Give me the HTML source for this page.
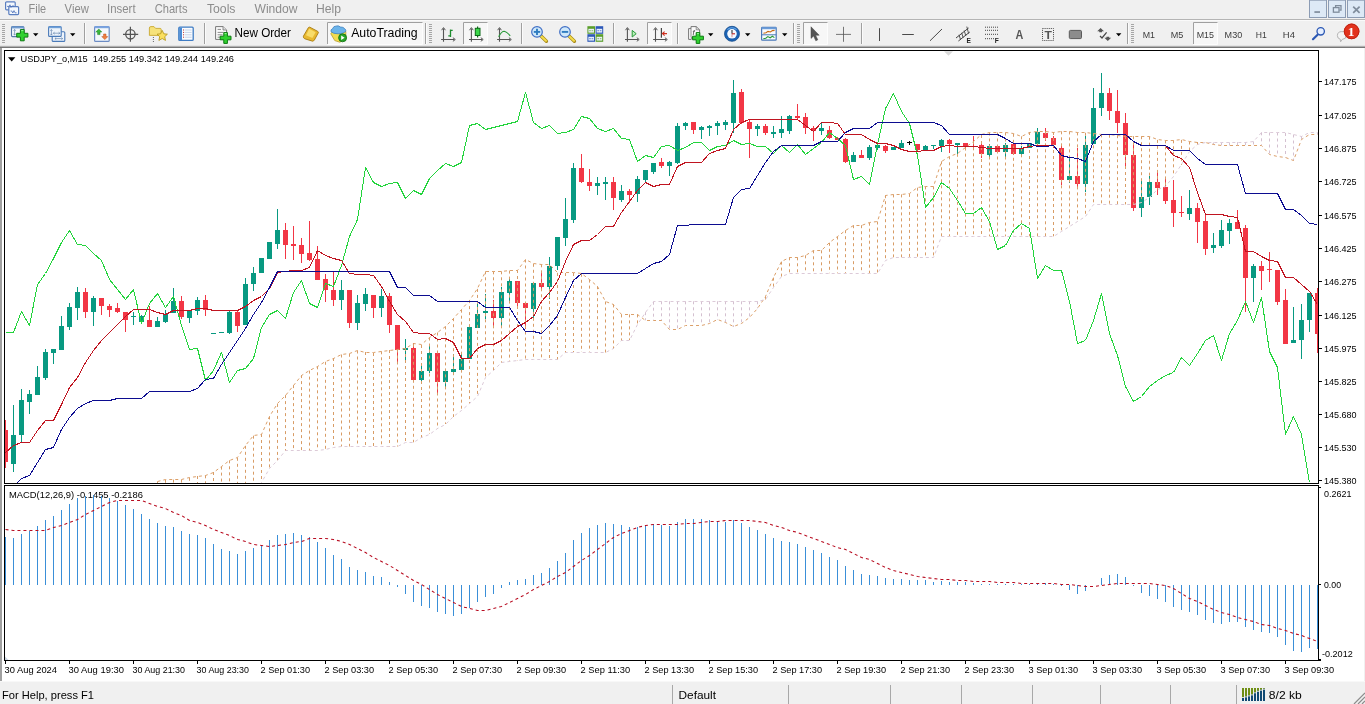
<!DOCTYPE html><html><head><meta charset="utf-8"><title>USDJPY_o,M15</title>
<style>html,body{margin:0;padding:0;background:#f0f0f0;overflow:hidden}svg{display:block;will-change:transform}text{font-family:"Liberation Sans",Arial,sans-serif;white-space:pre}</style></head><body>
<svg width="1365" height="704" viewBox="0 0 1365 704">
<rect x="0" y="0" width="1365" height="704" fill="#f0f0f0"/>
<!--MENU-->
<text x="28.6" y="12.8" font-size="12.2" textLength="17.6" lengthAdjust="spacingAndGlyphs" fill="#8c8c8c" >File</text>
<text x="64.6" y="12.8" font-size="12.2" textLength="24.2" lengthAdjust="spacingAndGlyphs" fill="#8c8c8c" >View</text>
<text x="107" y="12.8" font-size="12.2" textLength="28.6" lengthAdjust="spacingAndGlyphs" fill="#8c8c8c" >Insert</text>
<text x="154.7" y="12.8" font-size="12.2" textLength="32.8" lengthAdjust="spacingAndGlyphs" fill="#8c8c8c" >Charts</text>
<text x="206.9" y="12.8" font-size="12.2" textLength="28.6" lengthAdjust="spacingAndGlyphs" fill="#8c8c8c" >Tools</text>
<text x="254.5" y="12.8" font-size="12.2" textLength="43.0" lengthAdjust="spacingAndGlyphs" fill="#8c8c8c" >Window</text>
<text x="316" y="12.8" font-size="12.2" textLength="25" lengthAdjust="spacingAndGlyphs" fill="#8c8c8c" >Help</text>
<rect x="0" y="19" width="1365" height="1" fill="#b4b4b4"/>
<rect x="0" y="20" width="1365" height="1" fill="#fafafa"/>
<g fill="#f4f8fd" stroke="#5a7ec0" stroke-width="1.2"><rect x="5.6" y="1.8" width="9.6" height="8" rx="1"/><rect x="8.8" y="6.6" width="9.8" height="8" rx="1"/></g>
<path d="M7 6.4h2l1-1.6 1 2.6 1-1.4h2" stroke="#4a6eb8" stroke-width=".8" fill="none"/><path d="M10.6 11h1.2l1 2 1.2-2.4 1 2.2h1.6" stroke="#4a6eb8" stroke-width=".8" fill="none"/>
<rect x="1309.5" y="0.200" width="17" height="17.300" fill="#dde9f6" stroke="#8c9cb4" stroke-width="1"/>
<rect x="1328.5" y="0.200" width="17" height="17.300" fill="#dde9f6" stroke="#8c9cb4" stroke-width="1"/>
<rect x="1347.5" y="0.200" width="17" height="17.300" fill="#dde9f6" stroke="#8c9cb4" stroke-width="1"/>
<rect x="1314.4" y="11.2" width="5.6" height="1.7" fill="#7f8c9c"/>
<g fill="none" stroke="#7f8c9c" stroke-width="1.3"><path d="M1335.6 7.2V5.6h5.4v4.6h-1.6"/><rect x="1333.4" y="7.6" width="5.6" height="4.6"/></g>
<path d="M1353.2 6.6l6.4 6.2M1359.6 6.6l-6.4 6.2" stroke="#7f8c9c" stroke-width="1.7" fill="none"/>
<rect x="2" y="24" width="3" height="1" fill="#a6a6a6" shape-rendering="crispEdges"/>
<rect x="2" y="26" width="3" height="1" fill="#a6a6a6" shape-rendering="crispEdges"/>
<rect x="2" y="28" width="3" height="1" fill="#a6a6a6" shape-rendering="crispEdges"/>
<rect x="2" y="30" width="3" height="1" fill="#a6a6a6" shape-rendering="crispEdges"/>
<rect x="2" y="32" width="3" height="1" fill="#a6a6a6" shape-rendering="crispEdges"/>
<rect x="2" y="34" width="3" height="1" fill="#a6a6a6" shape-rendering="crispEdges"/>
<rect x="2" y="36" width="3" height="1" fill="#a6a6a6" shape-rendering="crispEdges"/>
<rect x="2" y="38" width="3" height="1" fill="#a6a6a6" shape-rendering="crispEdges"/>
<rect x="2" y="40" width="3" height="1" fill="#a6a6a6" shape-rendering="crispEdges"/>
<rect x="2" y="42" width="3" height="1" fill="#a6a6a6" shape-rendering="crispEdges"/>
<rect x="11.5" y="26.6" width="12.4" height="10" rx="1" fill="#f2f6fb" stroke="#5578a8" stroke-width="1.1"/><rect x="11.5" y="26.4" width="12.4" height="2" fill="#6f9bd0"/>
<path d="M14.6 29.6v5.4M13.6 30.8l1-1.4 1 1.4M13.6 33.8l1 1.4 1-1.4" stroke="#6a8ab0" stroke-width=".7" fill="none"/>
<path d="M20.400000000000002 29.6h3.8v3.6999999999999997h3.6999999999999997v3.8h-3.6999999999999997v3.6999999999999997h-3.8v-3.6999999999999997h-3.6999999999999997v-3.8h3.6999999999999997z" fill="#2fd12f" stroke="#0d7a12" stroke-width="1" stroke-linejoin="round"/>
<path d="M21.200000000000003 30.6h2.1999999999999997" stroke="#9af59a" stroke-width="1"/>
<path d="M33 33.2h5.4l-2.7 3z" fill="#000"/>
<rect x="52.2" y="31.8" width="12.6" height="9.6" rx="1" fill="#eef4fb" stroke="#4a7ab8" stroke-width="1.1"/>
<path d="M55 38.6h7.6M61.4 37.6l1.3 1-1.3 1M56.200 37.600l-1.300 1 1.300 1" stroke="#6a8ab0" stroke-width=".7" fill="none"/>
<rect x="48.6" y="26.6" width="12.6" height="9.800" rx="1" fill="#eef4fb" stroke="#4a7ab8" stroke-width="1.1"/>
<rect x="48.6" y="26.4" width="12.6" height="1.8" fill="#6fa0d8"/>
<path d="M51.400 29.600v5.400M50.400 30.800l1-1.300 1 1.300M50.400 33.800l1 1.200 1-1.200M53.400 33.200h6.400M58.600 32.200l1.300 1-1.300 1M54.600 32.200l-1.300 1 1.300 1" stroke="#6a8ab0" stroke-width=".7" fill="none"/>
<path d="M70 33.2h5.4l-2.7 3z" fill="#000"/>
<rect x="84" y="23" width="1" height="21" fill="#a0a0a0" shape-rendering="crispEdges"/>
<rect x="85" y="23" width="1" height="21" fill="#fbfbfb" shape-rendering="crispEdges"/>
<rect x="94.6" y="26.6" width="14.6" height="14.8" rx="1" fill="#f4f8fc" stroke="#6c8cc4" stroke-width="1.2"/><rect x="94.6" y="26.2" width="14.6" height="2" fill="#7aa4e0"/>
<path d="M98.8 29l3 3h-1.8v2.6h-2.4v-2.6h-1.8z" fill="#3cb83c" stroke="#1a8020" stroke-width=".5"/>
<path d="M104.8 39.6l-3-3h1.8v-2.6h2.4v2.6h1.8z" fill="#f08040" stroke="#c04818" stroke-width=".5"/>
<circle cx="130.4" cy="34.3" r="4.7" fill="none" stroke="#555" stroke-width="1.3"/><path d="M130.4 26.8v15M123 34.3h15.200" stroke="#555" stroke-width="1.200"/>
<path d="M149.4 35.4V28q0-1.4 1.4-1.4h3.2l1.6 1.8h4.6q1 0 1 1V35.4z" fill="#f6e27a" stroke="#c8a832" stroke-width=".9"/>
<path d="M153.4 37v5" stroke="#666" stroke-width="1" stroke-dasharray="1 1"/>
<path d="M162.2 30.4l1.6 3.4 3.6.4-2.7 2.5.8 3.7-3.3-1.9-3.3 1.9.8-3.7-2.7-2.5 3.6-.4z" fill="#fbe060" stroke="#b89a20" stroke-width=".9" stroke-linejoin="round"/>
<rect x="178.8" y="27.2" width="14.4" height="13.2" rx="1" fill="#fbfdff" stroke="#3f7cc4" stroke-width="1.3"/><rect x="179.2" y="27.6" width="2.8" height="12.4" fill="#4a8ad4"/>
<path d="M184.6 30h7M184.6 32.4h7M184.6 34.8h7M184.6 37.2h7" stroke="#b8c8e4" stroke-width=".8"/><path d="M183 30h1M183 32.4h1M183 34.8h1M183 37.2h1" stroke="#c03030" stroke-width="1"/>
<rect x="204" y="23" width="1" height="21" fill="#a0a0a0" shape-rendering="crispEdges"/>
<rect x="205" y="23" width="1" height="21" fill="#fbfbfb" shape-rendering="crispEdges"/>
<path d="M215.6 26.6h7.4l3.6 3.4v9.4h-11z" fill="#fbfbfb" stroke="#777" stroke-width="1"/>
<path d="M223.0 26.6v3.4h3.6" fill="#e0e0e0" stroke="#777" stroke-width=".8"/>
<path d="M217.6 29.4h3.4M217.6 32.4h6M217.6 34.8h5M217.6 37.2h3" stroke="#8a8a8a" stroke-width="1"/>
<path d="M223.79999999999998 32.6h3.6v3.6000000000000005h3.6000000000000005v3.6h-3.6000000000000005v3.6000000000000005h-3.6v-3.6000000000000005h-3.6000000000000005v-3.6h3.6000000000000005z" fill="#2fd12f" stroke="#0d7a12" stroke-width="1" stroke-linejoin="round"/>
<path d="M224.6 33.6h2.0" stroke="#9af59a" stroke-width="1"/>
<text x="234.5" y="36.7" font-size="12" textLength="56.5" lengthAdjust="spacingAndGlyphs" fill="#000">New Order</text>
<path d="M303.4 36.2l5-8.6q.5-.8 1.4-.4l8 4.2q1 .6.4 1.6l-3.8 7q-.6 1-1.800 1.200l-7.8-2.400q-1.800-.8-1.400-2.600z" fill="#e8b830" stroke="#a87c10" stroke-width=".9" stroke-linejoin="round"/>
<path d="M309.2 28.800l6.400 3.400-3.200 5.800-6.400-2.800z" fill="#f8dc6a"/>
<rect x="327" y="22" width="96" height="22" fill="#f7f7f7"/>
<path d="M327.5 44V22.5H423" fill="none" stroke="#a0a0a0" stroke-width="1"/>
<path d="M327.5 44.5H422.5V22.5" fill="none" stroke="#fdfdfd" stroke-width="1"/>
<path d="M332.6 31.400l-1.800 2.400 4 6.800 5 1.600 6-3.400v-7.400z" fill="#f2dc50" stroke="#b89c28" stroke-width=".8" stroke-linejoin="round"/>
<path d="M331 31.600q-.6-2 1.600-3 .8-2.600 3.800-2.600 2.200-.6 4 1 3-.2 4.400 1.800 1.800 1.200.6 3-2.400 2-7.200 2-5.200 0-7.200-2.200z" fill="#6cb4ea" stroke="#3f82c0" stroke-width=".8"/>
<circle cx="342.600" cy="37.800" r="4" fill="#28a428" stroke="#0e700e" stroke-width=".8"/><path d="M341.200 35.600l3.400 2.200-3.400 2.200z" fill="#fff"/>
<text x="351.2" y="36.7" font-size="12" textLength="66.4" lengthAdjust="spacingAndGlyphs" fill="#000">AutoTrading</text>
<rect x="425" y="23" width="1" height="21" fill="#a0a0a0" shape-rendering="crispEdges"/>
<rect x="426" y="23" width="1" height="21" fill="#fbfbfb" shape-rendering="crispEdges"/>
<rect x="429" y="24" width="3" height="1" fill="#a6a6a6" shape-rendering="crispEdges"/>
<rect x="429" y="26" width="3" height="1" fill="#a6a6a6" shape-rendering="crispEdges"/>
<rect x="429" y="28" width="3" height="1" fill="#a6a6a6" shape-rendering="crispEdges"/>
<rect x="429" y="30" width="3" height="1" fill="#a6a6a6" shape-rendering="crispEdges"/>
<rect x="429" y="32" width="3" height="1" fill="#a6a6a6" shape-rendering="crispEdges"/>
<rect x="429" y="34" width="3" height="1" fill="#a6a6a6" shape-rendering="crispEdges"/>
<rect x="429" y="36" width="3" height="1" fill="#a6a6a6" shape-rendering="crispEdges"/>
<rect x="429" y="38" width="3" height="1" fill="#a6a6a6" shape-rendering="crispEdges"/>
<rect x="429" y="40" width="3" height="1" fill="#a6a6a6" shape-rendering="crispEdges"/>
<rect x="429" y="42" width="3" height="1" fill="#a6a6a6" shape-rendering="crispEdges"/>
<path d="M443.5 28.4V41.8M441.1 39.5H454.3" stroke="#555" stroke-width="1.1" fill="none"/>
<path d="M441.6 30.2L443.5 27.6L445.4 30.2M452.9 37.7L455.3 39.5L452.9 41.3" stroke="#555" stroke-width="1" fill="none"/>
<path d="M450.5 29.400v7.600M450.500 30.400h2.200M448.300 35.800h2.200" stroke="#1e8c2e" stroke-width="1.300" fill="none"/>
<rect x="463" y="22" width="25" height="22" fill="#f7f7f7"/>
<path d="M463.5 44V22.5H488" fill="none" stroke="#a0a0a0" stroke-width="1"/>
<path d="M463.5 44.5H487.5V22.5" fill="none" stroke="#fdfdfd" stroke-width="1"/>
<path d="M471.4 28.4V41.8M469.0 39.5H482.2" stroke="#555" stroke-width="1.1" fill="none"/>
<path d="M469.5 30.2L471.4 27.6L473.29999999999995 30.2M480.79999999999995 37.7L483.2 39.5L480.79999999999995 41.3" stroke="#555" stroke-width="1" fill="none"/>
<path d="M477.600 26.400v11" stroke="#0d6a18" stroke-width="1.200"/><rect x="475.300" y="28.300" width="4.700" height="7.200" fill="#3ad648" stroke="#0d6a18" stroke-width="1"/>
<path d="M499.5 28.4V41.8M497.1 39.5H510.3" stroke="#555" stroke-width="1.1" fill="none"/>
<path d="M497.6 30.2L499.5 27.6L501.4 30.2M508.9 37.7L511.3 39.5L508.9 41.3" stroke="#555" stroke-width="1" fill="none"/>
<path d="M498.600 36.800q3-5.600 5.600-5.600 2.400.4 6 4.600" stroke="#2a9a3a" stroke-width="1.100" fill="none"/>
<rect x="521" y="23" width="1" height="21" fill="#a0a0a0" shape-rendering="crispEdges"/>
<rect x="522" y="23" width="1" height="21" fill="#fbfbfb" shape-rendering="crispEdges"/>
<path d="M540.8 35.800l5.600 5.400" stroke="#a88a18" stroke-width="3.400" stroke-linecap="round"/><path d="M541.2 36.200l4.800 4.600" stroke="#f4dc4a" stroke-width="2" stroke-linecap="round"/>
<circle cx="537" cy="31.900" r="5.300" fill="#cfe8fa" stroke="#3f6ec4" stroke-width="1.200"/>
<path d="M533.8 31.900h6.400" stroke="#2f7cc0" stroke-width="1.900"/>
<path d="M537 28.700v6.400" stroke="#2f7cc0" stroke-width="1.900"/>
<path d="M568.8 35.800l5.600 5.400" stroke="#a88a18" stroke-width="3.400" stroke-linecap="round"/><path d="M569.2 36.200l4.800 4.600" stroke="#f4dc4a" stroke-width="2" stroke-linecap="round"/>
<circle cx="565" cy="31.900" r="5.300" fill="#cfe8fa" stroke="#3f6ec4" stroke-width="1.200"/>
<path d="M561.8 31.900h6.400" stroke="#2f7cc0" stroke-width="1.900"/>
<rect x="587.4" y="26.2" width="7.600" height="7.600" fill="#5a9e2a"/><rect x="588.4" y="28.8" width="5.600" height="3.800" fill="#e8f0fa"/><path d="M589.1999999999999 30.7h1.600M591.6 30.7h1.600" stroke="#5a9e2a" stroke-width=".7"/>
<rect x="595.6" y="26.2" width="7.600" height="7.600" fill="#2c58b8"/><rect x="596.6" y="28.8" width="5.600" height="3.800" fill="#e8f0fa"/><path d="M597.4 30.7h1.600M599.8000000000001 30.7h1.600" stroke="#2c58b8" stroke-width=".7"/>
<rect x="587.4" y="34.2" width="7.600" height="7.600" fill="#2c58b8"/><rect x="588.4" y="36.800000000000004" width="5.600" height="3.800" fill="#e8f0fa"/><path d="M589.1999999999999 38.7h1.600M591.6 38.7h1.600" stroke="#2c58b8" stroke-width=".7"/>
<rect x="595.6" y="34.2" width="7.600" height="7.600" fill="#5a9e2a"/><rect x="596.6" y="36.800000000000004" width="5.600" height="3.800" fill="#e8f0fa"/><path d="M597.4 38.7h1.600M599.8000000000001 38.7h1.600" stroke="#5a9e2a" stroke-width=".7"/>
<rect x="613" y="23" width="1" height="21" fill="#a0a0a0" shape-rendering="crispEdges"/>
<rect x="614" y="23" width="1" height="21" fill="#fbfbfb" shape-rendering="crispEdges"/>
<path d="M627.4 28.4V41.8M625.0 39.5H638.1999999999999" stroke="#555" stroke-width="1.1" fill="none"/>
<path d="M625.5 30.2L627.4 27.6L629.3 30.2M636.8 37.7L639.1999999999999 39.5L636.8 41.3" stroke="#555" stroke-width="1" fill="none"/>
<path d="M632.200 30.400l4 3.300-4 3.300z" fill="#b8f0b8" stroke="#2a9a3a" stroke-width="1"/>
<rect x="647" y="22" width="25" height="22" fill="#f7f7f7"/>
<path d="M647.5 44V22.5H672" fill="none" stroke="#a0a0a0" stroke-width="1"/>
<path d="M647.5 44.5H671.5V22.5" fill="none" stroke="#fdfdfd" stroke-width="1"/>
<path d="M655.5 28.4V41.8M653.1 39.5H666.3" stroke="#555" stroke-width="1.1" fill="none"/>
<path d="M653.6 30.2L655.5 27.6L657.4 30.2M664.9 37.7L667.3 39.5L664.9 41.3" stroke="#555" stroke-width="1" fill="none"/>
<path d="M661.400 28v9.800" stroke="#444" stroke-width="1.200"/><path d="M667 33.600h-4.400M664.600 31.600l-2.200 2 2.200 2" stroke="#d03020" stroke-width="1.100" fill="none"/>
<rect x="677" y="23" width="1" height="21" fill="#a0a0a0" shape-rendering="crispEdges"/>
<rect x="678" y="23" width="1" height="21" fill="#fbfbfb" shape-rendering="crispEdges"/>
<path d="M688.600 28.600h2.400v-2h5.200l3.400 3.200v9h-8.600v.6h-2.400z" fill="#fbfbfb" stroke="#777" stroke-width="1"/><path d="M696.200 26.600v3.200h3.400M691 28.600v8.800h6" fill="none" stroke="#777" stroke-width=".8"/>
<text x="692.400" y="34.600" font-size="6.500" font-style="italic" font-weight="bold" fill="#666">f</text>
<path d="M696.2 32.6h3.6v3.6000000000000005h3.6000000000000005v3.6h-3.6000000000000005v3.6000000000000005h-3.6v-3.6000000000000005h-3.6000000000000005v-3.6h3.6000000000000005z" fill="#2fd12f" stroke="#0d7a12" stroke-width="1" stroke-linejoin="round"/>
<path d="M697.0 33.6h2.0" stroke="#9af59a" stroke-width="1"/>
<path d="M708 33.2h5.4l-2.7 3z" fill="#000"/>
<circle cx="732" cy="33.800" r="7.500" fill="#1c63b4" stroke="#124a8c" stroke-width=".8"/><circle cx="732" cy="33.800" r="4.800" fill="#f6faff"/><path d="M727.400 29.600a6.600 6.600 0 0 1 9.200 0" stroke="#6aa8e8" stroke-width="1.200" fill="none"/>
<path d="M732 33.800v-3.800" stroke="#333" stroke-width="1.100"/><path d="M732 33.800h3" stroke="#c02020" stroke-width="1.100"/><path d="M732 33.800v3.400" stroke="#c06060" stroke-width=".7"/>
<path d="M745 33.2h5.4l-2.7 3z" fill="#000"/>
<rect x="761.600" y="27.400" width="14.600" height="12.800" rx=".8" fill="#f8fbff" stroke="#4a78b8" stroke-width="1.200"/><rect x="761.600" y="27.200" width="14.600" height="2" fill="#6c9cd8"/><path d="M761.600 34.800h14.600" stroke="#4a78b8" stroke-width="1"/>
<path d="M763.400 33.200l2.600-.4 2-1.400 2.400.6 2-1.400 2.200-.2" stroke="#c86a10" stroke-width="1.100" fill="none"/><path d="M763.400 38.600l2.400-.4 2-1.600 2.400 1.200 2.200-1.600 2 1.400" stroke="#2a9a3a" stroke-width="1.100" fill="none"/>
<path d="M782 33.2h5.4l-2.7 3z" fill="#000"/>
<rect x="793" y="23" width="1" height="21" fill="#a0a0a0" shape-rendering="crispEdges"/>
<rect x="794" y="23" width="1" height="21" fill="#fbfbfb" shape-rendering="crispEdges"/>
<rect x="797" y="24" width="3" height="1" fill="#a6a6a6" shape-rendering="crispEdges"/>
<rect x="797" y="26" width="3" height="1" fill="#a6a6a6" shape-rendering="crispEdges"/>
<rect x="797" y="28" width="3" height="1" fill="#a6a6a6" shape-rendering="crispEdges"/>
<rect x="797" y="30" width="3" height="1" fill="#a6a6a6" shape-rendering="crispEdges"/>
<rect x="797" y="32" width="3" height="1" fill="#a6a6a6" shape-rendering="crispEdges"/>
<rect x="797" y="34" width="3" height="1" fill="#a6a6a6" shape-rendering="crispEdges"/>
<rect x="797" y="36" width="3" height="1" fill="#a6a6a6" shape-rendering="crispEdges"/>
<rect x="797" y="38" width="3" height="1" fill="#a6a6a6" shape-rendering="crispEdges"/>
<rect x="797" y="40" width="3" height="1" fill="#a6a6a6" shape-rendering="crispEdges"/>
<rect x="797" y="42" width="3" height="1" fill="#a6a6a6" shape-rendering="crispEdges"/>
<rect x="803" y="22" width="25" height="22" fill="#f7f7f7"/>
<path d="M803.5 44V22.5H828" fill="none" stroke="#a0a0a0" stroke-width="1"/>
<path d="M803.5 44.5H827.5V22.5" fill="none" stroke="#fdfdfd" stroke-width="1"/>
<path d="M811 26.800v11.600l2.600-2.400 2.200 4.800 2-1-2.200-4.600h3.600z" fill="#555" stroke="#444" stroke-width=".5" stroke-linejoin="round"/>
<path d="M843.500 26.800v15M836 34.400h15" stroke="#555" stroke-width=".800" fill="none"/>
<rect x="861" y="23" width="1" height="21" fill="#a0a0a0" shape-rendering="crispEdges"/>
<rect x="862" y="23" width="1" height="21" fill="#fbfbfb" shape-rendering="crispEdges"/>
<path d="M879.500 28.200v12.800" stroke="#4a4a4a" stroke-width="1"/>
<path d="M902.200 34.500h11.600" stroke="#4a4a4a" stroke-width="1"/>
<path d="M930 40.800l12-11.800" stroke="#4a4a4a" stroke-width="1"/>
<path d="M956 38l12.600-10M958.400 41l11.400-9" stroke="#444" stroke-width="1"/><path d="M959 34.800l1.600 5M961.600 32.800l1.600 5M964.200 30.600l1.600 5.200M966.800 26.600l1.800 7" stroke="#444" stroke-width=".9"/>
<text x="966.400" y="42.800" font-size="6.600" font-weight="bold" fill="#222">E</text>
<path d="M985 27.2h13" stroke="#444" stroke-width="1" stroke-dasharray="1 1"/>
<path d="M985 30.3h13" stroke="#444" stroke-width="1" stroke-dasharray="1 1"/>
<path d="M985 34.3h13" stroke="#444" stroke-width="1" stroke-dasharray="1 1"/>
<path d="M985 38.7h13" stroke="#444" stroke-width="1" stroke-dasharray="1 1"/>
<rect x="994" y="37.600" width="5" height="5.500" fill="#f0f0f0"/><text x="994.800" y="42.800" font-size="6.600" font-weight="bold" fill="#222">F</text>
<text x="1015.600" y="39.200" font-size="12.400" font-weight="bold" fill="#555" textLength="7.800" lengthAdjust="spacingAndGlyphs">A</text>
<rect x="1042.500" y="28.500" width="11" height="12" fill="none" stroke="#444" stroke-width="1" stroke-dasharray="1 1.080"/><text x="1044.400" y="39.200" font-size="10.500" font-weight="bold" fill="#555" textLength="7.400" lengthAdjust="spacingAndGlyphs">T</text>
<rect x="1069.300" y="30.400" width="12.200" height="8.200" rx="1.200" fill="#8c8c8c" stroke="#5a5a5a" stroke-width="1"/>
<path d="M1100.600 28l3.400 3.200h-2v1h-2.800v-1h-2z" fill="#555"/><path d="M1107.800 41l-3.400-3.200h2v-1h2.800v1h2z" fill="#555"/><path d="M1100 36l2 2 4.600-5.600" stroke="#444" stroke-width="1.200" fill="none"/>
<path d="M1116 33.2h5.4l-2.7 3z" fill="#000"/>
<rect x="1127" y="23" width="1" height="21" fill="#a0a0a0" shape-rendering="crispEdges"/>
<rect x="1128" y="23" width="1" height="21" fill="#fbfbfb" shape-rendering="crispEdges"/>
<rect x="1131" y="24" width="3" height="1" fill="#a6a6a6" shape-rendering="crispEdges"/>
<rect x="1131" y="26" width="3" height="1" fill="#a6a6a6" shape-rendering="crispEdges"/>
<rect x="1131" y="28" width="3" height="1" fill="#a6a6a6" shape-rendering="crispEdges"/>
<rect x="1131" y="30" width="3" height="1" fill="#a6a6a6" shape-rendering="crispEdges"/>
<rect x="1131" y="32" width="3" height="1" fill="#a6a6a6" shape-rendering="crispEdges"/>
<rect x="1131" y="34" width="3" height="1" fill="#a6a6a6" shape-rendering="crispEdges"/>
<rect x="1131" y="36" width="3" height="1" fill="#a6a6a6" shape-rendering="crispEdges"/>
<rect x="1131" y="38" width="3" height="1" fill="#a6a6a6" shape-rendering="crispEdges"/>
<rect x="1131" y="40" width="3" height="1" fill="#a6a6a6" shape-rendering="crispEdges"/>
<rect x="1131" y="42" width="3" height="1" fill="#a6a6a6" shape-rendering="crispEdges"/>
<rect x="1193" y="22" width="25" height="22" fill="#f7f7f7"/>
<path d="M1193.5 44V22.5H1218" fill="none" stroke="#a0a0a0" stroke-width="1"/>
<path d="M1193.5 44.5H1217.5V22.5" fill="none" stroke="#fdfdfd" stroke-width="1"/>
<text x="1142.7" y="37.800" font-size="9.600" textLength="12.3" lengthAdjust="spacingAndGlyphs" fill="#3c3c3c">M1</text>
<text x="1170.7" y="37.800" font-size="9.600" textLength="12.6" lengthAdjust="spacingAndGlyphs" fill="#3c3c3c">M5</text>
<text x="1196.7" y="37.800" font-size="9.600" textLength="17.3" lengthAdjust="spacingAndGlyphs" fill="#3c3c3c">M15</text>
<text x="1224.6" y="37.800" font-size="9.600" textLength="17.6" lengthAdjust="spacingAndGlyphs" fill="#3c3c3c">M30</text>
<text x="1255.8" y="37.800" font-size="9.600" textLength="11.0" lengthAdjust="spacingAndGlyphs" fill="#3c3c3c">H1</text>
<text x="1282.8" y="37.800" font-size="9.600" textLength="12.1" lengthAdjust="spacingAndGlyphs" fill="#3c3c3c">H4</text>
<path d="M1317.600 34.800l-4.600 4.400" stroke="#2c58b4" stroke-width="2.200" stroke-linecap="round"/><circle cx="1320.700" cy="31.300" r="3.700" fill="#e4eeff" stroke="#2c58b4" stroke-width="1.300"/>
<path d="M1337.400 35.600q0-4 4.400-4t4.400 4q0 3.600-4 3.800l-1.600 2.400-.4-2.600q-2.800-.6-2.800-3.600z" fill="#f4f4f4" stroke="#b4b4b4" stroke-width="1"/>
<circle cx="1351.600" cy="31.400" r="7.800" fill="#e2321c"/><circle cx="1351.600" cy="31.400" r="7.300" fill="none" stroke="#c02414" stroke-width="1"/>
<text x="1347.800" y="36.200" font-size="13.500" font-weight="bold" fill="#fff" style="font-family:'Liberation Serif',serif">1</text>
<rect x="0" y="45" width="1365" height="1" fill="#e4e4e4"/>
<rect x="0" y="46" width="1365" height="1" fill="#b0b0b0"/>
<rect x="0" y="47" width="1365" height="1" fill="#767676"/>
<rect x="0" y="48" width="2" height="633" fill="#a0a0a0"/>
<rect x="2" y="48" width="1362" height="633" fill="#fff"/>
<rect x="0" y="681" width="1365" height="1" fill="#f8f8f8"/>
<g shape-rendering="crispEdges" fill="#000">
<rect x="4" y="50" width="1315" height="1"/>
<rect x="4" y="50" width="1" height="434"/><rect x="4" y="485" width="1" height="176"/>
<rect x="1318" y="50" width="1" height="434"/><rect x="1318" y="485" width="1" height="176"/>
<rect x="4" y="483" width="1315" height="1"/>
<rect x="4" y="485" width="1315" height="1"/>
<rect x="4" y="660" width="1317" height="1"/>
<rect x="1319" y="81" width="3" height="1"/>
<rect x="1319" y="115" width="3" height="1"/>
<rect x="1319" y="148" width="3" height="1"/>
<rect x="1319" y="181" width="3" height="1"/>
<rect x="1319" y="215" width="3" height="1"/>
<rect x="1319" y="248" width="3" height="1"/>
<rect x="1319" y="281" width="3" height="1"/>
<rect x="1319" y="315" width="3" height="1"/>
<rect x="1319" y="348" width="3" height="1"/>
<rect x="1319" y="381" width="3" height="1"/>
<rect x="1319" y="414" width="3" height="1"/>
<rect x="1319" y="447" width="3" height="1"/>
<rect x="1319" y="480" width="3" height="1"/>
<rect x="1319" y="487" width="2" height="1"/>
<rect x="1319" y="584" width="2" height="1"/>
<rect x="1319" y="659" width="2" height="1"/>
<rect x="5" y="661" width="1" height="3"/>
<rect x="69" y="661" width="1" height="3"/>
<rect x="133" y="661" width="1" height="3"/>
<rect x="197" y="661" width="1" height="3"/>
<rect x="261" y="661" width="1" height="3"/>
<rect x="325" y="661" width="1" height="3"/>
<rect x="389" y="661" width="1" height="3"/>
<rect x="453" y="661" width="1" height="3"/>
<rect x="517" y="661" width="1" height="3"/>
<rect x="581" y="661" width="1" height="3"/>
<rect x="645" y="661" width="1" height="3"/>
<rect x="709" y="661" width="1" height="3"/>
<rect x="773" y="661" width="1" height="3"/>
<rect x="837" y="661" width="1" height="3"/>
<rect x="901" y="661" width="1" height="3"/>
<rect x="965" y="661" width="1" height="3"/>
<rect x="1029" y="661" width="1" height="3"/>
<rect x="1093" y="661" width="1" height="3"/>
<rect x="1157" y="661" width="1" height="3"/>
<rect x="1221" y="661" width="1" height="3"/>
<rect x="1285" y="661" width="1" height="3"/>
</g>
<text x="1324" y="84.9" font-size="9.7" textLength="32.6" lengthAdjust="spacingAndGlyphs" fill="#000" >147.175</text>
<text x="1324" y="118.7" font-size="9.7" textLength="32.6" lengthAdjust="spacingAndGlyphs" fill="#000" >147.025</text>
<text x="1324" y="151.9" font-size="9.7" textLength="32.6" lengthAdjust="spacingAndGlyphs" fill="#000" >146.875</text>
<text x="1324" y="185.1" font-size="9.7" textLength="32.6" lengthAdjust="spacingAndGlyphs" fill="#000" >146.725</text>
<text x="1324" y="218.6" font-size="9.7" textLength="32.6" lengthAdjust="spacingAndGlyphs" fill="#000" >146.575</text>
<text x="1324" y="251.7" font-size="9.7" textLength="32.6" lengthAdjust="spacingAndGlyphs" fill="#000" >146.425</text>
<text x="1324" y="285.0" font-size="9.7" textLength="32.6" lengthAdjust="spacingAndGlyphs" fill="#000" >146.275</text>
<text x="1324" y="318.6" font-size="9.7" textLength="32.6" lengthAdjust="spacingAndGlyphs" fill="#000" >146.125</text>
<text x="1324" y="351.9" font-size="9.7" textLength="32.6" lengthAdjust="spacingAndGlyphs" fill="#000" >145.975</text>
<text x="1324" y="385.2" font-size="9.7" textLength="32.6" lengthAdjust="spacingAndGlyphs" fill="#000" >145.825</text>
<text x="1324" y="418.1" font-size="9.7" textLength="32.6" lengthAdjust="spacingAndGlyphs" fill="#000" >145.680</text>
<text x="1324" y="451.1" font-size="9.7" textLength="32.6" lengthAdjust="spacingAndGlyphs" fill="#000" >145.530</text>
<text x="1324" y="484.1" font-size="9.7" textLength="32.6" lengthAdjust="spacingAndGlyphs" fill="#000" >145.380</text>
<text x="1324" y="496.6" font-size="9.7" textLength="27.5" lengthAdjust="spacingAndGlyphs" fill="#000" >0.2621</text>
<text x="1324" y="587.8" font-size="9.7" textLength="17" lengthAdjust="spacingAndGlyphs" fill="#000" >0.00</text>
<text x="1322" y="657.4" font-size="9.7" textLength="30.7" lengthAdjust="spacingAndGlyphs" fill="#000" >-0.2012</text>
<text x="4.5" y="673" font-size="9.8" textLength="52.5" lengthAdjust="spacingAndGlyphs" fill="#000" >30 Aug 2024</text>
<text x="68.5" y="673" font-size="9.8" textLength="55.5" lengthAdjust="spacingAndGlyphs" fill="#000" >30 Aug 19:30</text>
<text x="132.5" y="673" font-size="9.8" textLength="52.5" lengthAdjust="spacingAndGlyphs" fill="#000" >30 Aug 21:30</text>
<text x="196.5" y="673" font-size="9.8" textLength="52.5" lengthAdjust="spacingAndGlyphs" fill="#000" >30 Aug 23:30</text>
<text x="260.5" y="673" font-size="9.8" textLength="49.6" lengthAdjust="spacingAndGlyphs" fill="#000" >2 Sep 01:30</text>
<text x="324.5" y="673" font-size="9.8" textLength="49.6" lengthAdjust="spacingAndGlyphs" fill="#000" >2 Sep 03:30</text>
<text x="388.5" y="673" font-size="9.8" textLength="49.6" lengthAdjust="spacingAndGlyphs" fill="#000" >2 Sep 05:30</text>
<text x="452.5" y="673" font-size="9.8" textLength="49.6" lengthAdjust="spacingAndGlyphs" fill="#000" >2 Sep 07:30</text>
<text x="516.5" y="673" font-size="9.8" textLength="49.6" lengthAdjust="spacingAndGlyphs" fill="#000" >2 Sep 09:30</text>
<text x="580.5" y="673" font-size="9.8" textLength="49.6" lengthAdjust="spacingAndGlyphs" fill="#000" >2 Sep 11:30</text>
<text x="644.5" y="673" font-size="9.8" textLength="49.6" lengthAdjust="spacingAndGlyphs" fill="#000" >2 Sep 13:30</text>
<text x="708.5" y="673" font-size="9.8" textLength="49.6" lengthAdjust="spacingAndGlyphs" fill="#000" >2 Sep 15:30</text>
<text x="772.5" y="673" font-size="9.8" textLength="49.6" lengthAdjust="spacingAndGlyphs" fill="#000" >2 Sep 17:30</text>
<text x="836.5" y="673" font-size="9.8" textLength="49.6" lengthAdjust="spacingAndGlyphs" fill="#000" >2 Sep 19:30</text>
<text x="900.5" y="673" font-size="9.8" textLength="49.6" lengthAdjust="spacingAndGlyphs" fill="#000" >2 Sep 21:30</text>
<text x="964.5" y="673" font-size="9.8" textLength="49.6" lengthAdjust="spacingAndGlyphs" fill="#000" >2 Sep 23:30</text>
<text x="1028.5" y="673" font-size="9.8" textLength="49.6" lengthAdjust="spacingAndGlyphs" fill="#000" >3 Sep 01:30</text>
<text x="1092.5" y="673" font-size="9.8" textLength="49.6" lengthAdjust="spacingAndGlyphs" fill="#000" >3 Sep 03:30</text>
<text x="1156.5" y="673" font-size="9.8" textLength="49.6" lengthAdjust="spacingAndGlyphs" fill="#000" >3 Sep 05:30</text>
<text x="1220.5" y="673" font-size="9.8" textLength="49.6" lengthAdjust="spacingAndGlyphs" fill="#000" >3 Sep 07:30</text>
<text x="1284.5" y="673" font-size="9.8" textLength="49.6" lengthAdjust="spacingAndGlyphs" fill="#000" >3 Sep 09:30</text>
<path d="M944 51.2h9l-4.500 4.600z" fill="#dadada"/>
<path d="M5 656.500l3.500 3.500h-3.500z" fill="#ccd6e2"/>
<path d="M8 57.2h7.4l-3.7 4.2z" fill="#000"/>
<text x="20.5" y="62" font-size="9.8" textLength="213.5" lengthAdjust="spacingAndGlyphs" fill="#000" >USDJPY_o,M15  149.255 149.342 149.244 149.246</text>
<text x="9" y="497.8" font-size="9.8" textLength="134" lengthAdjust="spacingAndGlyphs" fill="#000" >MACD(12,26,9) -0.1455 -0.2186</text>
<clipPath id="cm"><rect x="5" y="51" width="1313" height="432"/></clipPath>
<clipPath id="ci"><rect x="5" y="486" width="1313" height="174"/></clipPath>
<g clip-path="url(#cm)">
<g shape-rendering="crispEdges">
<rect x="5" y="420" width="1" height="48" fill="#f23645"/>
<rect x="3" y="430" width="5" height="32" fill="#f23645"/>
<rect x="13" y="405" width="1" height="67" fill="#089981"/>
<rect x="11" y="435" width="5" height="29" fill="#089981"/>
<rect x="21" y="389" width="1" height="53" fill="#089981"/>
<rect x="19" y="400" width="5" height="35" fill="#089981"/>
<rect x="29" y="390" width="1" height="24" fill="#089981"/>
<rect x="27" y="394" width="5" height="8" fill="#089981"/>
<rect x="37" y="366" width="1" height="29" fill="#089981"/>
<rect x="35" y="377" width="5" height="18" fill="#089981"/>
<rect x="45" y="349" width="1" height="31" fill="#089981"/>
<rect x="43" y="352" width="5" height="26" fill="#089981"/>
<rect x="53" y="349" width="1" height="15" fill="#089981"/>
<rect x="51" y="349" width="5" height="4" fill="#089981"/>
<rect x="61" y="316" width="1" height="34" fill="#089981"/>
<rect x="59" y="326" width="5" height="24" fill="#089981"/>
<rect x="69" y="303" width="1" height="27" fill="#089981"/>
<rect x="67" y="307" width="5" height="20" fill="#089981"/>
<rect x="77" y="287" width="1" height="33" fill="#089981"/>
<rect x="75" y="292" width="5" height="16" fill="#089981"/>
<rect x="85" y="288" width="1" height="30" fill="#f23645"/>
<rect x="83" y="292" width="5" height="20" fill="#f23645"/>
<rect x="93" y="296" width="1" height="30" fill="#089981"/>
<rect x="91" y="298" width="5" height="14" fill="#089981"/>
<rect x="101" y="298" width="1" height="17" fill="#f23645"/>
<rect x="99" y="298" width="5" height="8" fill="#f23645"/>
<rect x="109" y="304" width="1" height="13" fill="#f23645"/>
<rect x="107" y="306" width="5" height="4" fill="#f23645"/>
<rect x="117" y="303" width="1" height="10" fill="#f23645"/>
<rect x="115" y="308" width="5" height="4" fill="#f23645"/>
<rect x="125" y="312" width="1" height="20" fill="#f23645"/>
<rect x="123" y="312" width="5" height="8" fill="#f23645"/>
<rect x="133" y="312" width="1" height="13" fill="#089981"/>
<rect x="131" y="316" width="5" height="1" fill="#089981"/>
<rect x="141" y="315" width="1" height="9" fill="#089981"/>
<rect x="139" y="316" width="5" height="6" fill="#089981"/>
<rect x="149" y="306" width="1" height="21" fill="#f23645"/>
<rect x="147" y="320" width="5" height="7" fill="#f23645"/>
<rect x="157" y="317" width="1" height="10" fill="#089981"/>
<rect x="155" y="321" width="5" height="6" fill="#089981"/>
<rect x="165" y="310" width="1" height="13" fill="#089981"/>
<rect x="163" y="314" width="5" height="8" fill="#089981"/>
<rect x="173" y="288" width="1" height="25" fill="#089981"/>
<rect x="171" y="301" width="5" height="12" fill="#089981"/>
<rect x="181" y="296" width="1" height="23" fill="#f23645"/>
<rect x="179" y="301" width="5" height="16" fill="#f23645"/>
<rect x="189" y="310" width="1" height="13" fill="#089981"/>
<rect x="187" y="311" width="5" height="7" fill="#089981"/>
<rect x="197" y="297" width="1" height="18" fill="#089981"/>
<rect x="195" y="300" width="5" height="11" fill="#089981"/>
<rect x="205" y="295" width="1" height="21" fill="#f23645"/>
<rect x="203" y="300" width="5" height="10" fill="#f23645"/>
<rect x="213" y="333" width="1" height="1" fill="#089981"/>
<rect x="211" y="333" width="5" height="1" fill="#089981"/>
<rect x="221" y="332" width="1" height="1" fill="#089981"/>
<rect x="219" y="332" width="5" height="1" fill="#089981"/>
<rect x="229" y="310" width="1" height="24" fill="#089981"/>
<rect x="227" y="312" width="5" height="21" fill="#089981"/>
<rect x="237" y="310" width="1" height="22" fill="#f23645"/>
<rect x="235" y="312" width="5" height="14" fill="#f23645"/>
<rect x="245" y="278" width="1" height="47" fill="#089981"/>
<rect x="243" y="284" width="5" height="41" fill="#089981"/>
<rect x="253" y="267" width="1" height="24" fill="#089981"/>
<rect x="251" y="273" width="5" height="11" fill="#089981"/>
<rect x="261" y="258" width="1" height="15" fill="#089981"/>
<rect x="259" y="258" width="5" height="15" fill="#089981"/>
<rect x="269" y="242" width="1" height="17" fill="#089981"/>
<rect x="267" y="242" width="5" height="17" fill="#089981"/>
<rect x="277" y="209" width="1" height="40" fill="#089981"/>
<rect x="275" y="230" width="5" height="14" fill="#089981"/>
<rect x="285" y="223" width="1" height="36" fill="#f23645"/>
<rect x="283" y="230" width="5" height="15" fill="#f23645"/>
<rect x="293" y="226" width="1" height="34" fill="#f23645"/>
<rect x="291" y="244" width="5" height="2" fill="#f23645"/>
<rect x="301" y="238" width="1" height="25" fill="#f23645"/>
<rect x="299" y="245" width="5" height="9" fill="#f23645"/>
<rect x="309" y="221" width="1" height="40" fill="#f23645"/>
<rect x="307" y="253" width="5" height="7" fill="#f23645"/>
<rect x="317" y="246" width="1" height="34" fill="#f23645"/>
<rect x="315" y="259" width="5" height="21" fill="#f23645"/>
<rect x="325" y="274" width="1" height="28" fill="#f23645"/>
<rect x="323" y="279" width="5" height="11" fill="#f23645"/>
<rect x="333" y="271" width="1" height="35" fill="#f23645"/>
<rect x="331" y="290" width="5" height="10" fill="#f23645"/>
<rect x="341" y="280" width="1" height="30" fill="#089981"/>
<rect x="339" y="290" width="5" height="10" fill="#089981"/>
<rect x="349" y="290" width="1" height="38" fill="#f23645"/>
<rect x="347" y="290" width="5" height="33" fill="#f23645"/>
<rect x="357" y="295" width="1" height="35" fill="#089981"/>
<rect x="355" y="303" width="5" height="20" fill="#089981"/>
<rect x="365" y="288" width="1" height="23" fill="#089981"/>
<rect x="363" y="294" width="5" height="10" fill="#089981"/>
<rect x="373" y="295" width="1" height="23" fill="#f23645"/>
<rect x="371" y="295" width="5" height="13" fill="#f23645"/>
<rect x="381" y="289" width="1" height="28" fill="#089981"/>
<rect x="379" y="296" width="5" height="12" fill="#089981"/>
<rect x="389" y="293" width="1" height="40" fill="#f23645"/>
<rect x="387" y="296" width="5" height="29" fill="#f23645"/>
<rect x="397" y="325" width="1" height="37" fill="#f23645"/>
<rect x="395" y="325" width="5" height="25" fill="#f23645"/>
<rect x="405" y="339" width="1" height="23" fill="#089981"/>
<rect x="403" y="348" width="5" height="2" fill="#089981"/>
<rect x="413" y="343" width="1" height="37" fill="#f23645"/>
<rect x="411" y="348" width="5" height="32" fill="#f23645"/>
<rect x="421" y="364" width="1" height="19" fill="#089981"/>
<rect x="419" y="371" width="5" height="9" fill="#089981"/>
<rect x="429" y="344" width="1" height="29" fill="#089981"/>
<rect x="427" y="353" width="5" height="18" fill="#089981"/>
<rect x="437" y="353" width="1" height="40" fill="#f23645"/>
<rect x="435" y="353" width="5" height="29" fill="#f23645"/>
<rect x="445" y="371" width="1" height="17" fill="#089981"/>
<rect x="443" y="371" width="5" height="11" fill="#089981"/>
<rect x="453" y="354" width="1" height="21" fill="#089981"/>
<rect x="451" y="369" width="5" height="3" fill="#089981"/>
<rect x="461" y="354" width="1" height="16" fill="#089981"/>
<rect x="459" y="359" width="5" height="11" fill="#089981"/>
<rect x="469" y="327" width="1" height="32" fill="#089981"/>
<rect x="467" y="327" width="5" height="32" fill="#089981"/>
<rect x="477" y="304" width="1" height="24" fill="#089981"/>
<rect x="475" y="314" width="5" height="14" fill="#089981"/>
<rect x="485" y="294" width="1" height="25" fill="#089981"/>
<rect x="483" y="311" width="5" height="2" fill="#089981"/>
<rect x="493" y="300" width="1" height="26" fill="#f23645"/>
<rect x="491" y="311" width="5" height="7" fill="#f23645"/>
<rect x="501" y="287" width="1" height="41" fill="#089981"/>
<rect x="499" y="292" width="5" height="26" fill="#089981"/>
<rect x="509" y="279" width="1" height="24" fill="#089981"/>
<rect x="507" y="281" width="5" height="12" fill="#089981"/>
<rect x="517" y="281" width="1" height="27" fill="#f23645"/>
<rect x="515" y="281" width="5" height="22" fill="#f23645"/>
<rect x="525" y="303" width="1" height="26" fill="#f23645"/>
<rect x="523" y="303" width="5" height="5" fill="#f23645"/>
<rect x="533" y="283" width="1" height="35" fill="#089981"/>
<rect x="531" y="283" width="5" height="26" fill="#089981"/>
<rect x="541" y="271" width="1" height="20" fill="#f23645"/>
<rect x="539" y="283" width="5" height="4" fill="#f23645"/>
<rect x="549" y="257" width="1" height="42" fill="#089981"/>
<rect x="547" y="266" width="5" height="21" fill="#089981"/>
<rect x="557" y="237" width="1" height="33" fill="#089981"/>
<rect x="555" y="237" width="5" height="29" fill="#089981"/>
<rect x="565" y="198" width="1" height="48" fill="#089981"/>
<rect x="563" y="219" width="5" height="19" fill="#089981"/>
<rect x="573" y="163" width="1" height="60" fill="#089981"/>
<rect x="571" y="168" width="5" height="52" fill="#089981"/>
<rect x="581" y="154" width="1" height="29" fill="#f23645"/>
<rect x="579" y="168" width="5" height="14" fill="#f23645"/>
<rect x="589" y="169" width="1" height="22" fill="#f23645"/>
<rect x="587" y="182" width="5" height="4" fill="#f23645"/>
<rect x="597" y="177" width="1" height="18" fill="#089981"/>
<rect x="595" y="183" width="5" height="3" fill="#089981"/>
<rect x="605" y="177" width="1" height="23" fill="#089981"/>
<rect x="603" y="182" width="5" height="2" fill="#089981"/>
<rect x="613" y="177" width="1" height="33" fill="#f23645"/>
<rect x="611" y="182" width="5" height="16" fill="#f23645"/>
<rect x="621" y="185" width="1" height="17" fill="#089981"/>
<rect x="619" y="191" width="5" height="9" fill="#089981"/>
<rect x="629" y="189" width="1" height="14" fill="#f23645"/>
<rect x="627" y="191" width="5" height="4" fill="#f23645"/>
<rect x="637" y="176" width="1" height="26" fill="#089981"/>
<rect x="635" y="179" width="5" height="15" fill="#089981"/>
<rect x="645" y="170" width="1" height="13" fill="#089981"/>
<rect x="643" y="170" width="5" height="10" fill="#089981"/>
<rect x="653" y="163" width="1" height="11" fill="#089981"/>
<rect x="651" y="163" width="5" height="9" fill="#089981"/>
<rect x="661" y="158" width="1" height="10" fill="#f23645"/>
<rect x="659" y="162" width="5" height="4" fill="#f23645"/>
<rect x="669" y="161" width="1" height="15" fill="#089981"/>
<rect x="667" y="162" width="5" height="4" fill="#089981"/>
<rect x="677" y="123" width="1" height="41" fill="#089981"/>
<rect x="675" y="126" width="5" height="37" fill="#089981"/>
<rect x="685" y="122" width="1" height="8" fill="#089981"/>
<rect x="683" y="123" width="5" height="3" fill="#089981"/>
<rect x="693" y="122" width="1" height="12" fill="#f23645"/>
<rect x="691" y="122" width="5" height="8" fill="#f23645"/>
<rect x="701" y="126" width="1" height="13" fill="#089981"/>
<rect x="699" y="127" width="5" height="3" fill="#089981"/>
<rect x="709" y="125" width="1" height="11" fill="#089981"/>
<rect x="707" y="126" width="5" height="2" fill="#089981"/>
<rect x="717" y="121" width="1" height="14" fill="#089981"/>
<rect x="715" y="123" width="5" height="3" fill="#089981"/>
<rect x="725" y="120" width="1" height="10" fill="#089981"/>
<rect x="723" y="122" width="5" height="3" fill="#089981"/>
<rect x="733" y="80" width="1" height="53" fill="#089981"/>
<rect x="731" y="93" width="5" height="30" fill="#089981"/>
<rect x="741" y="89" width="1" height="35" fill="#f23645"/>
<rect x="739" y="92" width="5" height="31" fill="#f23645"/>
<rect x="749" y="119" width="1" height="39" fill="#f23645"/>
<rect x="747" y="122" width="5" height="7" fill="#f23645"/>
<rect x="757" y="124" width="1" height="12" fill="#089981"/>
<rect x="755" y="126" width="5" height="3" fill="#089981"/>
<rect x="765" y="124" width="1" height="11" fill="#f23645"/>
<rect x="763" y="126" width="5" height="7" fill="#f23645"/>
<rect x="773" y="126" width="1" height="12" fill="#089981"/>
<rect x="771" y="132" width="5" height="2" fill="#089981"/>
<rect x="781" y="116" width="1" height="22" fill="#089981"/>
<rect x="779" y="129" width="5" height="4" fill="#089981"/>
<rect x="789" y="115" width="1" height="19" fill="#089981"/>
<rect x="787" y="116" width="5" height="15" fill="#089981"/>
<rect x="797" y="104" width="1" height="15" fill="#f23645"/>
<rect x="795" y="116" width="5" height="2" fill="#f23645"/>
<rect x="805" y="113" width="1" height="21" fill="#f23645"/>
<rect x="803" y="117" width="5" height="11" fill="#f23645"/>
<rect x="813" y="126" width="1" height="15" fill="#f23645"/>
<rect x="811" y="128" width="5" height="3" fill="#f23645"/>
<rect x="821" y="123" width="1" height="12" fill="#089981"/>
<rect x="819" y="128" width="5" height="3" fill="#089981"/>
<rect x="829" y="126" width="1" height="13" fill="#f23645"/>
<rect x="827" y="130" width="5" height="8" fill="#f23645"/>
<rect x="837" y="137" width="1" height="3" fill="#f23645"/>
<rect x="835" y="138" width="5" height="2" fill="#f23645"/>
<rect x="845" y="138" width="1" height="25" fill="#f23645"/>
<rect x="843" y="139" width="5" height="23" fill="#f23645"/>
<rect x="853" y="152" width="1" height="10" fill="#089981"/>
<rect x="851" y="155" width="5" height="7" fill="#089981"/>
<rect x="861" y="150" width="1" height="8" fill="#f23645"/>
<rect x="859" y="155" width="5" height="3" fill="#f23645"/>
<rect x="869" y="145" width="1" height="15" fill="#089981"/>
<rect x="867" y="147" width="5" height="11" fill="#089981"/>
<rect x="877" y="144" width="1" height="6" fill="#089981"/>
<rect x="875" y="145" width="5" height="3" fill="#089981"/>
<rect x="885" y="145" width="1" height="8" fill="#f23645"/>
<rect x="883" y="146" width="5" height="5" fill="#f23645"/>
<rect x="893" y="147" width="1" height="3" fill="#089981"/>
<rect x="891" y="147" width="5" height="3" fill="#089981"/>
<rect x="901" y="140" width="1" height="8" fill="#089981"/>
<rect x="899" y="143" width="5" height="5" fill="#089981"/>
<rect x="909" y="141" width="1" height="4" fill="#000"/>
<rect x="907" y="142" width="5" height="1" fill="#000"/>
<rect x="917" y="144" width="1" height="8" fill="#f23645"/>
<rect x="915" y="144" width="5" height="6" fill="#f23645"/>
<rect x="925" y="145" width="1" height="5" fill="#089981"/>
<rect x="923" y="146" width="5" height="4" fill="#089981"/>
<rect x="933" y="145" width="1" height="4" fill="#089981"/>
<rect x="931" y="145" width="5" height="1" fill="#089981"/>
<rect x="941" y="139" width="1" height="13" fill="#089981"/>
<rect x="939" y="140" width="5" height="6" fill="#089981"/>
<rect x="949" y="139" width="1" height="14" fill="#f23645"/>
<rect x="947" y="140" width="5" height="4" fill="#f23645"/>
<rect x="957" y="143" width="1" height="11" fill="#089981"/>
<rect x="955" y="143" width="5" height="2" fill="#089981"/>
<rect x="965" y="143" width="1" height="6" fill="#f23645"/>
<rect x="963" y="143" width="5" height="4" fill="#f23645"/>
<rect x="973" y="136" width="1" height="12" fill="#f23645"/>
<rect x="971" y="146" width="5" height="1" fill="#f23645"/>
<rect x="981" y="143" width="1" height="15" fill="#f23645"/>
<rect x="979" y="145" width="5" height="9" fill="#f23645"/>
<rect x="989" y="144" width="1" height="15" fill="#089981"/>
<rect x="987" y="146" width="5" height="9" fill="#089981"/>
<rect x="997" y="145" width="1" height="8" fill="#f23645"/>
<rect x="995" y="146" width="5" height="6" fill="#f23645"/>
<rect x="1005" y="143" width="1" height="15" fill="#089981"/>
<rect x="1003" y="145" width="5" height="7" fill="#089981"/>
<rect x="1013" y="143" width="1" height="12" fill="#f23645"/>
<rect x="1011" y="144" width="5" height="10" fill="#f23645"/>
<rect x="1021" y="146" width="1" height="9" fill="#089981"/>
<rect x="1019" y="148" width="5" height="6" fill="#089981"/>
<rect x="1029" y="143" width="1" height="5" fill="#089981"/>
<rect x="1027" y="143" width="5" height="5" fill="#089981"/>
<rect x="1037" y="128" width="1" height="17" fill="#089981"/>
<rect x="1035" y="132" width="5" height="12" fill="#089981"/>
<rect x="1045" y="128" width="1" height="13" fill="#f23645"/>
<rect x="1043" y="133" width="5" height="5" fill="#f23645"/>
<rect x="1053" y="136" width="1" height="12" fill="#f23645"/>
<rect x="1051" y="138" width="5" height="7" fill="#f23645"/>
<rect x="1061" y="146" width="1" height="39" fill="#f23645"/>
<rect x="1059" y="148" width="5" height="32" fill="#f23645"/>
<rect x="1069" y="156" width="1" height="27" fill="#089981"/>
<rect x="1067" y="176" width="5" height="4" fill="#089981"/>
<rect x="1077" y="148" width="1" height="40" fill="#f23645"/>
<rect x="1075" y="176" width="5" height="8" fill="#f23645"/>
<rect x="1085" y="136" width="1" height="56" fill="#089981"/>
<rect x="1083" y="145" width="5" height="39" fill="#089981"/>
<rect x="1093" y="88" width="1" height="56" fill="#089981"/>
<rect x="1091" y="108" width="5" height="36" fill="#089981"/>
<rect x="1101" y="73" width="1" height="43" fill="#089981"/>
<rect x="1099" y="93" width="5" height="15" fill="#089981"/>
<rect x="1109" y="88" width="1" height="32" fill="#f23645"/>
<rect x="1107" y="93" width="5" height="18" fill="#f23645"/>
<rect x="1117" y="90" width="1" height="43" fill="#f23645"/>
<rect x="1115" y="111" width="5" height="12" fill="#f23645"/>
<rect x="1125" y="113" width="1" height="56" fill="#f23645"/>
<rect x="1123" y="123" width="5" height="32" fill="#f23645"/>
<rect x="1133" y="143" width="1" height="68" fill="#f23645"/>
<rect x="1131" y="155" width="5" height="53" fill="#f23645"/>
<rect x="1141" y="180" width="1" height="37" fill="#089981"/>
<rect x="1139" y="197" width="5" height="11" fill="#089981"/>
<rect x="1149" y="176" width="1" height="29" fill="#089981"/>
<rect x="1147" y="182" width="5" height="15" fill="#089981"/>
<rect x="1157" y="172" width="1" height="23" fill="#f23645"/>
<rect x="1155" y="182" width="5" height="6" fill="#f23645"/>
<rect x="1165" y="177" width="1" height="27" fill="#f23645"/>
<rect x="1163" y="187" width="5" height="14" fill="#f23645"/>
<rect x="1173" y="180" width="1" height="47" fill="#f23645"/>
<rect x="1171" y="200" width="5" height="13" fill="#f23645"/>
<rect x="1181" y="196" width="1" height="21" fill="#f23645"/>
<rect x="1179" y="212" width="5" height="1" fill="#f23645"/>
<rect x="1189" y="190" width="1" height="30" fill="#089981"/>
<rect x="1187" y="208" width="5" height="6" fill="#089981"/>
<rect x="1197" y="203" width="1" height="40" fill="#f23645"/>
<rect x="1195" y="208" width="5" height="14" fill="#f23645"/>
<rect x="1205" y="214" width="1" height="41" fill="#f23645"/>
<rect x="1203" y="221" width="5" height="28" fill="#f23645"/>
<rect x="1213" y="233" width="1" height="20" fill="#089981"/>
<rect x="1211" y="245" width="5" height="3" fill="#089981"/>
<rect x="1221" y="220" width="1" height="28" fill="#089981"/>
<rect x="1219" y="230" width="5" height="16" fill="#089981"/>
<rect x="1229" y="219" width="1" height="25" fill="#089981"/>
<rect x="1227" y="223" width="5" height="8" fill="#089981"/>
<rect x="1237" y="210" width="1" height="19" fill="#f23645"/>
<rect x="1235" y="222" width="5" height="7" fill="#f23645"/>
<rect x="1245" y="225" width="1" height="87" fill="#f23645"/>
<rect x="1243" y="228" width="5" height="50" fill="#f23645"/>
<rect x="1253" y="264" width="1" height="38" fill="#089981"/>
<rect x="1251" y="266" width="5" height="12" fill="#089981"/>
<rect x="1261" y="261" width="1" height="29" fill="#f23645"/>
<rect x="1259" y="266" width="5" height="5" fill="#f23645"/>
<rect x="1269" y="252" width="1" height="30" fill="#f23645"/>
<rect x="1267" y="269" width="5" height="1" fill="#f23645"/>
<rect x="1277" y="270" width="1" height="35" fill="#f23645"/>
<rect x="1275" y="270" width="5" height="32" fill="#f23645"/>
<rect x="1285" y="289" width="1" height="55" fill="#f23645"/>
<rect x="1283" y="300" width="5" height="44" fill="#f23645"/>
<rect x="1293" y="307" width="1" height="36" fill="#089981"/>
<rect x="1291" y="340" width="5" height="3" fill="#089981"/>
<rect x="1301" y="304" width="1" height="55" fill="#089981"/>
<rect x="1299" y="320" width="5" height="20" fill="#089981"/>
<rect x="1309" y="293" width="1" height="39" fill="#089981"/>
<rect x="1307" y="293" width="5" height="27" fill="#089981"/>
<rect x="1317" y="288" width="1" height="65" fill="#f23645"/>
<rect x="1315" y="293" width="5" height="41" fill="#f23645"/>
</g>
<line x1="157.5" y1="481.6" x2="157.5" y2="495.0" stroke="#d89c66" stroke-width="1" stroke-dasharray="3 3"/>
<line x1="165.5" y1="479.8" x2="165.5" y2="495.0" stroke="#d89c66" stroke-width="1" stroke-dasharray="3 3"/>
<line x1="173.5" y1="479.6" x2="173.5" y2="495.0" stroke="#d89c66" stroke-width="1" stroke-dasharray="3 3"/>
<line x1="181.5" y1="479.6" x2="181.5" y2="495.0" stroke="#d89c66" stroke-width="1" stroke-dasharray="3 3"/>
<line x1="189.5" y1="477.8" x2="189.5" y2="495.0" stroke="#d89c66" stroke-width="1" stroke-dasharray="3 3"/>
<line x1="197.5" y1="476.0" x2="197.5" y2="495.0" stroke="#d89c66" stroke-width="1" stroke-dasharray="3 3"/>
<line x1="205.5" y1="475.3" x2="205.5" y2="495.0" stroke="#d89c66" stroke-width="1" stroke-dasharray="3 3"/>
<line x1="213.5" y1="472.0" x2="213.5" y2="495.0" stroke="#d89c66" stroke-width="1" stroke-dasharray="3 3"/>
<line x1="221.5" y1="466.6" x2="221.5" y2="495.0" stroke="#d89c66" stroke-width="1" stroke-dasharray="3 3"/>
<line x1="229.5" y1="460.3" x2="229.5" y2="495.0" stroke="#d89c66" stroke-width="1" stroke-dasharray="3 3"/>
<line x1="237.5" y1="457.8" x2="237.5" y2="495.0" stroke="#d89c66" stroke-width="1" stroke-dasharray="3 3"/>
<line x1="245.5" y1="445.8" x2="245.5" y2="495.0" stroke="#d89c66" stroke-width="1" stroke-dasharray="3 3"/>
<line x1="253.5" y1="435.7" x2="253.5" y2="495.0" stroke="#d89c66" stroke-width="1" stroke-dasharray="3 3"/>
<line x1="261.5" y1="434.0" x2="261.5" y2="482.0" stroke="#d89c66" stroke-width="1" stroke-dasharray="3 3"/>
<line x1="269.5" y1="416.4" x2="269.5" y2="469.0" stroke="#d89c66" stroke-width="1" stroke-dasharray="3 3"/>
<line x1="277.5" y1="403.9" x2="277.5" y2="460.3" stroke="#d89c66" stroke-width="1" stroke-dasharray="3 3"/>
<line x1="285.5" y1="395.1" x2="285.5" y2="451.0" stroke="#d89c66" stroke-width="1" stroke-dasharray="3 3"/>
<line x1="293.5" y1="385.1" x2="293.5" y2="451.0" stroke="#d89c66" stroke-width="1" stroke-dasharray="3 3"/>
<line x1="301.5" y1="375.1" x2="301.5" y2="451.0" stroke="#d89c66" stroke-width="1" stroke-dasharray="3 3"/>
<line x1="309.5" y1="370.6" x2="309.5" y2="451.0" stroke="#d89c66" stroke-width="1" stroke-dasharray="3 3"/>
<line x1="317.5" y1="366.3" x2="317.5" y2="450.5" stroke="#d89c66" stroke-width="1" stroke-dasharray="3 3"/>
<line x1="325.5" y1="361.8" x2="325.5" y2="449.8" stroke="#d89c66" stroke-width="1" stroke-dasharray="3 3"/>
<line x1="333.5" y1="358.0" x2="333.5" y2="447.8" stroke="#d89c66" stroke-width="1" stroke-dasharray="3 3"/>
<line x1="341.5" y1="354.5" x2="341.5" y2="446.5" stroke="#d89c66" stroke-width="1" stroke-dasharray="3 3"/>
<line x1="349.5" y1="353.8" x2="349.5" y2="446.5" stroke="#d89c66" stroke-width="1" stroke-dasharray="3 3"/>
<line x1="357.5" y1="350.5" x2="357.5" y2="446.5" stroke="#d89c66" stroke-width="1" stroke-dasharray="3 3"/>
<line x1="365.5" y1="352.0" x2="365.5" y2="446.5" stroke="#d89c66" stroke-width="1" stroke-dasharray="3 3"/>
<line x1="373.5" y1="353.0" x2="373.5" y2="446.5" stroke="#d89c66" stroke-width="1" stroke-dasharray="3 3"/>
<line x1="381.5" y1="351.3" x2="381.5" y2="446.5" stroke="#d89c66" stroke-width="1" stroke-dasharray="3 3"/>
<line x1="389.5" y1="350.0" x2="389.5" y2="446.5" stroke="#d89c66" stroke-width="1" stroke-dasharray="3 3"/>
<line x1="397.5" y1="349.5" x2="397.5" y2="446.5" stroke="#d89c66" stroke-width="1" stroke-dasharray="3 3"/>
<line x1="405.5" y1="348.0" x2="405.5" y2="442.8" stroke="#d89c66" stroke-width="1" stroke-dasharray="3 3"/>
<line x1="413.5" y1="343.8" x2="413.5" y2="442.3" stroke="#d89c66" stroke-width="1" stroke-dasharray="3 3"/>
<line x1="421.5" y1="345.0" x2="421.5" y2="437.7" stroke="#d89c66" stroke-width="1" stroke-dasharray="3 3"/>
<line x1="429.5" y1="337.5" x2="429.5" y2="434.0" stroke="#d89c66" stroke-width="1" stroke-dasharray="3 3"/>
<line x1="437.5" y1="332.5" x2="437.5" y2="429.0" stroke="#d89c66" stroke-width="1" stroke-dasharray="3 3"/>
<line x1="445.5" y1="326.4" x2="445.5" y2="424.0" stroke="#d89c66" stroke-width="1" stroke-dasharray="3 3"/>
<line x1="453.5" y1="318.2" x2="453.5" y2="417.0" stroke="#d89c66" stroke-width="1" stroke-dasharray="3 3"/>
<line x1="461.5" y1="309.7" x2="461.5" y2="410.0" stroke="#d89c66" stroke-width="1" stroke-dasharray="3 3"/>
<line x1="469.5" y1="300.1" x2="469.5" y2="403.5" stroke="#d89c66" stroke-width="1" stroke-dasharray="3 3"/>
<line x1="477.5" y1="288.9" x2="477.5" y2="396.5" stroke="#d89c66" stroke-width="1" stroke-dasharray="3 3"/>
<line x1="485.5" y1="271.3" x2="485.5" y2="377.8" stroke="#d89c66" stroke-width="1" stroke-dasharray="3 3"/>
<line x1="493.5" y1="271.3" x2="493.5" y2="370.3" stroke="#d89c66" stroke-width="1" stroke-dasharray="3 3"/>
<line x1="501.5" y1="271.3" x2="501.5" y2="362.8" stroke="#d89c66" stroke-width="1" stroke-dasharray="3 3"/>
<line x1="509.5" y1="270.6" x2="509.5" y2="361.5" stroke="#d89c66" stroke-width="1" stroke-dasharray="3 3"/>
<line x1="517.5" y1="270.0" x2="517.5" y2="360.3" stroke="#d89c66" stroke-width="1" stroke-dasharray="3 3"/>
<line x1="525.5" y1="259.5" x2="525.5" y2="359.8" stroke="#d89c66" stroke-width="1" stroke-dasharray="3 3"/>
<line x1="533.5" y1="263.8" x2="533.5" y2="359.8" stroke="#d89c66" stroke-width="1" stroke-dasharray="3 3"/>
<line x1="541.5" y1="264.3" x2="541.5" y2="359.8" stroke="#d89c66" stroke-width="1" stroke-dasharray="3 3"/>
<line x1="549.5" y1="265.0" x2="549.5" y2="359.8" stroke="#d89c66" stroke-width="1" stroke-dasharray="3 3"/>
<line x1="557.5" y1="273.0" x2="557.5" y2="359.8" stroke="#d89c66" stroke-width="1" stroke-dasharray="3 3"/>
<line x1="565.5" y1="273.0" x2="565.5" y2="352.8" stroke="#d89c66" stroke-width="1" stroke-dasharray="3 3"/>
<line x1="573.5" y1="273.0" x2="573.5" y2="352.0" stroke="#d89c66" stroke-width="1" stroke-dasharray="3 3"/>
<line x1="581.5" y1="273.8" x2="581.5" y2="352.0" stroke="#d89c66" stroke-width="1" stroke-dasharray="3 3"/>
<line x1="589.5" y1="279.6" x2="589.5" y2="352.0" stroke="#d89c66" stroke-width="1" stroke-dasharray="3 3"/>
<line x1="597.5" y1="286.2" x2="597.5" y2="352.5" stroke="#d89c66" stroke-width="1" stroke-dasharray="3 3"/>
<line x1="605.5" y1="301.5" x2="605.5" y2="352.5" stroke="#d89c66" stroke-width="1" stroke-dasharray="3 3"/>
<line x1="613.5" y1="304.4" x2="613.5" y2="348.9" stroke="#d89c66" stroke-width="1" stroke-dasharray="3 3"/>
<line x1="621.5" y1="314.4" x2="621.5" y2="340.8" stroke="#d89c66" stroke-width="1" stroke-dasharray="3 3"/>
<line x1="629.5" y1="314.4" x2="629.5" y2="340.0" stroke="#d89c66" stroke-width="1" stroke-dasharray="3 3"/>
<line x1="637.5" y1="314.4" x2="637.5" y2="324.0" stroke="#d89c66" stroke-width="1" stroke-dasharray="3 3"/>
<line x1="645.5" y1="312.2" x2="645.5" y2="320.3" stroke="#d4c0d0" stroke-width="1" stroke-dasharray="3 3"/>
<line x1="653.5" y1="301.7" x2="653.5" y2="320.3" stroke="#d4c0d0" stroke-width="1" stroke-dasharray="3 3"/>
<line x1="661.5" y1="301.3" x2="661.5" y2="321.0" stroke="#d4c0d0" stroke-width="1" stroke-dasharray="3 3"/>
<line x1="669.5" y1="301.3" x2="669.5" y2="329.8" stroke="#d4c0d0" stroke-width="1" stroke-dasharray="3 3"/>
<line x1="677.5" y1="301.3" x2="677.5" y2="329.8" stroke="#d4c0d0" stroke-width="1" stroke-dasharray="3 3"/>
<line x1="685.5" y1="301.3" x2="685.5" y2="325.4" stroke="#d4c0d0" stroke-width="1" stroke-dasharray="3 3"/>
<line x1="693.5" y1="301.3" x2="693.5" y2="325.4" stroke="#d4c0d0" stroke-width="1" stroke-dasharray="3 3"/>
<line x1="701.5" y1="301.3" x2="701.5" y2="325.4" stroke="#d4c0d0" stroke-width="1" stroke-dasharray="3 3"/>
<line x1="709.5" y1="301.3" x2="709.5" y2="323.2" stroke="#d4c0d0" stroke-width="1" stroke-dasharray="3 3"/>
<line x1="717.5" y1="301.3" x2="717.5" y2="319.8" stroke="#d4c0d0" stroke-width="1" stroke-dasharray="3 3"/>
<line x1="725.5" y1="301.3" x2="725.5" y2="322.8" stroke="#d4c0d0" stroke-width="1" stroke-dasharray="3 3"/>
<line x1="733.5" y1="301.3" x2="733.5" y2="327.0" stroke="#d4c0d0" stroke-width="1" stroke-dasharray="3 3"/>
<line x1="741.5" y1="301.3" x2="741.5" y2="323.6" stroke="#d4c0d0" stroke-width="1" stroke-dasharray="3 3"/>
<line x1="749.5" y1="301.3" x2="749.5" y2="317.8" stroke="#d4c0d0" stroke-width="1" stroke-dasharray="3 3"/>
<line x1="757.5" y1="301.3" x2="757.5" y2="308.3" stroke="#d4c0d0" stroke-width="1" stroke-dasharray="3 3"/>
<line x1="765.5" y1="296.5" x2="765.5" y2="299.5" stroke="#d89c66" stroke-width="1" stroke-dasharray="3 3"/>
<line x1="773.5" y1="277.6" x2="773.5" y2="287.5" stroke="#d89c66" stroke-width="1" stroke-dasharray="3 3"/>
<line x1="781.5" y1="261.6" x2="781.5" y2="276.6" stroke="#d89c66" stroke-width="1" stroke-dasharray="3 3"/>
<line x1="789.5" y1="257.3" x2="789.5" y2="273.3" stroke="#d89c66" stroke-width="1" stroke-dasharray="3 3"/>
<line x1="797.5" y1="257.3" x2="797.5" y2="273.2" stroke="#d89c66" stroke-width="1" stroke-dasharray="3 3"/>
<line x1="805.5" y1="255.3" x2="805.5" y2="273.2" stroke="#d89c66" stroke-width="1" stroke-dasharray="3 3"/>
<line x1="813.5" y1="250.3" x2="813.5" y2="273.2" stroke="#d89c66" stroke-width="1" stroke-dasharray="3 3"/>
<line x1="821.5" y1="250.3" x2="821.5" y2="273.2" stroke="#d89c66" stroke-width="1" stroke-dasharray="3 3"/>
<line x1="829.5" y1="242.8" x2="829.5" y2="273.2" stroke="#d89c66" stroke-width="1" stroke-dasharray="3 3"/>
<line x1="837.5" y1="236.5" x2="837.5" y2="273.2" stroke="#d89c66" stroke-width="1" stroke-dasharray="3 3"/>
<line x1="845.5" y1="230.2" x2="845.5" y2="273.2" stroke="#d89c66" stroke-width="1" stroke-dasharray="3 3"/>
<line x1="853.5" y1="225.2" x2="853.5" y2="273.2" stroke="#d89c66" stroke-width="1" stroke-dasharray="3 3"/>
<line x1="861.5" y1="225.2" x2="861.5" y2="273.2" stroke="#d89c66" stroke-width="1" stroke-dasharray="3 3"/>
<line x1="869.5" y1="222.7" x2="869.5" y2="273.2" stroke="#d89c66" stroke-width="1" stroke-dasharray="3 3"/>
<line x1="877.5" y1="221.5" x2="877.5" y2="273.2" stroke="#d89c66" stroke-width="1" stroke-dasharray="3 3"/>
<line x1="885.5" y1="195.2" x2="885.5" y2="260.3" stroke="#d89c66" stroke-width="1" stroke-dasharray="3 3"/>
<line x1="893.5" y1="194.4" x2="893.5" y2="257.3" stroke="#d89c66" stroke-width="1" stroke-dasharray="3 3"/>
<line x1="901.5" y1="194.4" x2="901.5" y2="257.3" stroke="#d89c66" stroke-width="1" stroke-dasharray="3 3"/>
<line x1="909.5" y1="193.9" x2="909.5" y2="257.3" stroke="#d89c66" stroke-width="1" stroke-dasharray="3 3"/>
<line x1="917.5" y1="187.7" x2="917.5" y2="257.3" stroke="#d89c66" stroke-width="1" stroke-dasharray="3 3"/>
<line x1="925.5" y1="186.4" x2="925.5" y2="257.3" stroke="#d89c66" stroke-width="1" stroke-dasharray="3 3"/>
<line x1="933.5" y1="186.4" x2="933.5" y2="257.3" stroke="#d89c66" stroke-width="1" stroke-dasharray="3 3"/>
<line x1="941.5" y1="161.3" x2="941.5" y2="236.3" stroke="#d89c66" stroke-width="1" stroke-dasharray="3 3"/>
<line x1="949.5" y1="156.3" x2="949.5" y2="236.3" stroke="#d89c66" stroke-width="1" stroke-dasharray="3 3"/>
<line x1="957.5" y1="153.8" x2="957.5" y2="236.3" stroke="#d89c66" stroke-width="1" stroke-dasharray="3 3"/>
<line x1="965.5" y1="147.6" x2="965.5" y2="236.3" stroke="#d89c66" stroke-width="1" stroke-dasharray="3 3"/>
<line x1="973.5" y1="141.3" x2="973.5" y2="236.3" stroke="#d89c66" stroke-width="1" stroke-dasharray="3 3"/>
<line x1="981.5" y1="135.0" x2="981.5" y2="236.3" stroke="#d89c66" stroke-width="1" stroke-dasharray="3 3"/>
<line x1="989.5" y1="132.5" x2="989.5" y2="236.3" stroke="#d89c66" stroke-width="1" stroke-dasharray="3 3"/>
<line x1="997.5" y1="132.5" x2="997.5" y2="236.3" stroke="#d89c66" stroke-width="1" stroke-dasharray="3 3"/>
<line x1="1005.5" y1="132.5" x2="1005.5" y2="236.3" stroke="#d89c66" stroke-width="1" stroke-dasharray="3 3"/>
<line x1="1013.5" y1="133.8" x2="1013.5" y2="236.3" stroke="#d89c66" stroke-width="1" stroke-dasharray="3 3"/>
<line x1="1021.5" y1="136.3" x2="1021.5" y2="236.3" stroke="#d89c66" stroke-width="1" stroke-dasharray="3 3"/>
<line x1="1029.5" y1="132.0" x2="1029.5" y2="236.3" stroke="#d89c66" stroke-width="1" stroke-dasharray="3 3"/>
<line x1="1037.5" y1="131.3" x2="1037.5" y2="236.3" stroke="#d89c66" stroke-width="1" stroke-dasharray="3 3"/>
<line x1="1045.5" y1="131.3" x2="1045.5" y2="236.3" stroke="#d89c66" stroke-width="1" stroke-dasharray="3 3"/>
<line x1="1053.5" y1="132.0" x2="1053.5" y2="236.3" stroke="#d89c66" stroke-width="1" stroke-dasharray="3 3"/>
<line x1="1061.5" y1="131.3" x2="1061.5" y2="231.5" stroke="#d89c66" stroke-width="1" stroke-dasharray="3 3"/>
<line x1="1069.5" y1="131.4" x2="1069.5" y2="226.7" stroke="#d89c66" stroke-width="1" stroke-dasharray="3 3"/>
<line x1="1077.5" y1="132.4" x2="1077.5" y2="221.7" stroke="#d89c66" stroke-width="1" stroke-dasharray="3 3"/>
<line x1="1085.5" y1="132.8" x2="1085.5" y2="216.3" stroke="#d89c66" stroke-width="1" stroke-dasharray="3 3"/>
<line x1="1093.5" y1="133.3" x2="1093.5" y2="205.0" stroke="#d89c66" stroke-width="1" stroke-dasharray="3 3"/>
<line x1="1101.5" y1="134.3" x2="1101.5" y2="204.4" stroke="#d89c66" stroke-width="1" stroke-dasharray="3 3"/>
<line x1="1109.5" y1="134.7" x2="1109.5" y2="204.4" stroke="#d89c66" stroke-width="1" stroke-dasharray="3 3"/>
<line x1="1117.5" y1="135.2" x2="1117.5" y2="204.4" stroke="#d89c66" stroke-width="1" stroke-dasharray="3 3"/>
<line x1="1125.5" y1="136.0" x2="1125.5" y2="204.4" stroke="#d89c66" stroke-width="1" stroke-dasharray="3 3"/>
<line x1="1133.5" y1="136.2" x2="1133.5" y2="204.4" stroke="#d89c66" stroke-width="1" stroke-dasharray="3 3"/>
<line x1="1141.5" y1="136.2" x2="1141.5" y2="202.9" stroke="#d89c66" stroke-width="1" stroke-dasharray="3 3"/>
<line x1="1149.5" y1="136.7" x2="1149.5" y2="197.1" stroke="#d89c66" stroke-width="1" stroke-dasharray="3 3"/>
<line x1="1157.5" y1="139.9" x2="1157.5" y2="189.5" stroke="#d89c66" stroke-width="1" stroke-dasharray="3 3"/>
<line x1="1165.5" y1="140.4" x2="1165.5" y2="186.7" stroke="#d89c66" stroke-width="1" stroke-dasharray="3 3"/>
<line x1="1173.5" y1="140.3" x2="1173.5" y2="176.2" stroke="#d89c66" stroke-width="1" stroke-dasharray="3 3"/>
<line x1="1181.5" y1="139.9" x2="1181.5" y2="164.8" stroke="#d89c66" stroke-width="1" stroke-dasharray="3 3"/>
<line x1="1189.5" y1="141.5" x2="1189.5" y2="151.4" stroke="#d89c66" stroke-width="1" stroke-dasharray="3 3"/>
<line x1="1197.5" y1="142.0" x2="1197.5" y2="144.8" stroke="#d89c66" stroke-width="1" stroke-dasharray="3 3"/>
<line x1="1213.5" y1="142.5" x2="1213.5" y2="144.5" stroke="#d4c0d0" stroke-width="1" stroke-dasharray="3 3"/>
<line x1="1221.5" y1="142.5" x2="1221.5" y2="145.3" stroke="#d4c0d0" stroke-width="1" stroke-dasharray="3 3"/>
<line x1="1229.5" y1="142.5" x2="1229.5" y2="145.5" stroke="#d4c0d0" stroke-width="1" stroke-dasharray="3 3"/>
<line x1="1237.5" y1="142.2" x2="1237.5" y2="145.2" stroke="#d4c0d0" stroke-width="1" stroke-dasharray="3 3"/>
<line x1="1245.5" y1="142.0" x2="1245.5" y2="145.8" stroke="#d4c0d0" stroke-width="1" stroke-dasharray="3 3"/>
<line x1="1253.5" y1="141.5" x2="1253.5" y2="145.8" stroke="#d4c0d0" stroke-width="1" stroke-dasharray="3 3"/>
<line x1="1261.5" y1="132.3" x2="1261.5" y2="145.3" stroke="#d4c0d0" stroke-width="1" stroke-dasharray="3 3"/>
<line x1="1269.5" y1="132.5" x2="1269.5" y2="154.0" stroke="#d4c0d0" stroke-width="1" stroke-dasharray="3 3"/>
<line x1="1277.5" y1="132.5" x2="1277.5" y2="156.0" stroke="#d4c0d0" stroke-width="1" stroke-dasharray="3 3"/>
<line x1="1285.5" y1="133.0" x2="1285.5" y2="157.5" stroke="#d4c0d0" stroke-width="1" stroke-dasharray="3 3"/>
<line x1="1293.5" y1="134.5" x2="1293.5" y2="160.5" stroke="#d4c0d0" stroke-width="1" stroke-dasharray="3 3"/>
<line x1="1301.5" y1="136.0" x2="1301.5" y2="139.5" stroke="#d4c0d0" stroke-width="1" stroke-dasharray="3 3"/>
<line x1="1317.5" y1="132.5" x2="1317.5" y2="134.4" stroke="#d4c0d0" stroke-width="1" stroke-dasharray="3 3"/>
<polyline points="157.5,481.5 165.5,479.5 173.5,479.5 181.5,479.5 189.5,477.5 197.5,476.5 205.5,475.5 213.5,472.5 221.5,466.5 229.5,460.5 237.5,457.5 245.5,445.5 253.5,435.5 261.5,434.5 269.5,416.5 277.5,403.5 285.5,395.5 293.5,385.5 301.5,375.5 309.5,370.5 317.5,366.5 325.5,361.5 333.5,358.5 341.5,354.5 349.5,353.5 357.5,350.5 365.5,352.5 373.5,352.5 381.5,351.5 389.5,350.5 397.5,349.5 405.5,348.5 413.5,343.5 421.5,344.5 429.5,337.5 437.5,332.5 445.5,326.5 453.5,318.5 461.5,309.5 469.5,300.5 477.5,288.5 485.5,271.5 493.5,271.5 501.5,271.5 509.5,270.5 517.5,270.5 525.5,259.5 533.5,263.5 541.5,264.5 549.5,264.5 557.5,272.5 565.5,272.5 573.5,272.5 581.5,273.5 589.5,279.5 597.5,286.5 605.5,301.5 613.5,304.5 621.5,314.5 629.5,314.5 637.5,314.5 645.5,320.5 653.5,320.5 661.5,320.5 669.5,329.5 677.5,329.5 685.5,325.5 693.5,325.5 701.5,325.5 709.5,323.5 717.5,319.5 725.5,322.5 733.5,326.5 741.5,323.5 749.5,317.5 757.5,308.5 765.5,296.5 773.5,277.5 781.5,261.5 789.5,257.5 797.5,257.5 805.5,255.5 813.5,250.5 821.5,250.5 829.5,242.5 837.5,236.5 845.5,230.5 853.5,225.5 861.5,225.5 869.5,222.5 877.5,221.5 885.5,195.5 893.5,194.5 901.5,194.5 909.5,193.5 917.5,187.5 925.5,186.5 933.5,186.5 941.5,161.5 949.5,156.5 957.5,153.5 965.5,147.5 973.5,141.5 981.5,134.5 989.5,132.5 997.5,132.5 1005.5,132.5 1013.5,133.5 1021.5,136.5 1029.5,132.5 1037.5,131.5 1045.5,131.5 1053.5,132.5 1061.5,131.5 1069.5,131.5 1077.5,132.5 1085.5,132.5 1093.5,133.5 1101.5,134.5 1109.5,134.5 1117.5,135.5 1125.5,136.5 1133.5,136.5 1141.5,136.5 1149.5,136.5 1157.5,139.5 1165.5,140.5 1173.5,140.5 1181.5,139.5 1189.5,141.5 1197.5,142.5 1205.5,142.5 1213.5,144.5 1221.5,145.5 1229.5,145.5 1237.5,145.5 1245.5,145.5 1253.5,145.5 1261.5,145.5 1269.5,154.5 1277.5,156.5 1285.5,157.5 1293.5,160.5 1301.5,139.5 1309.5,134.5 1317.5,134.5" fill="none" stroke="#dca06a" stroke-width="1" stroke-dasharray="3 3" stroke-linejoin="round" />
<polyline points="253.5,494.5 261.5,482.5 269.5,468.5 277.5,460.5 285.5,450.5 293.5,450.5 301.5,450.5 309.5,450.5 317.5,450.5 325.5,449.5 333.5,447.5 341.5,446.5 349.5,446.5 357.5,446.5 365.5,446.5 373.5,446.5 381.5,446.5 389.5,446.5 397.5,446.5 405.5,442.5 413.5,442.5 421.5,437.5 429.5,434.5 437.5,428.5 445.5,424.5 453.5,416.5 461.5,410.5 469.5,403.5 477.5,396.5 485.5,377.5 493.5,370.5 501.5,362.5 509.5,361.5 517.5,360.5 525.5,359.5 533.5,359.5 541.5,359.5 549.5,359.5 557.5,359.5 565.5,352.5 573.5,352.5 581.5,352.5 589.5,352.5 597.5,352.5 605.5,352.5 613.5,348.5 621.5,340.5 629.5,340.5 637.5,324.5 645.5,312.5 653.5,301.5 661.5,301.5 669.5,301.5 677.5,301.5 685.5,301.5 693.5,301.5 701.5,301.5 709.5,301.5 717.5,301.5 725.5,301.5 733.5,301.5 741.5,301.5 749.5,301.5 757.5,301.5 765.5,299.5 773.5,287.5 781.5,276.5 789.5,273.5 797.5,273.5 805.5,273.5 813.5,273.5 821.5,273.5 829.5,273.5 837.5,273.5 845.5,273.5 853.5,273.5 861.5,273.5 869.5,273.5 877.5,273.5 885.5,260.5 893.5,257.5 901.5,257.5 909.5,257.5 917.5,257.5 925.5,257.5 933.5,257.5 941.5,236.5 949.5,236.5 957.5,236.5 965.5,236.5 973.5,236.5 981.5,236.5 989.5,236.5 997.5,236.5 1005.5,236.5 1013.5,236.5 1021.5,236.5 1029.5,236.5 1037.5,236.5 1045.5,236.5 1053.5,236.5 1061.5,231.5 1069.5,226.5 1077.5,221.5 1085.5,216.5 1093.5,204.5 1101.5,204.5 1109.5,204.5 1117.5,204.5 1125.5,204.5 1133.5,204.5 1141.5,202.5 1149.5,197.5 1157.5,189.5 1165.5,186.5 1173.5,176.5 1181.5,164.5 1189.5,151.5 1197.5,144.5 1205.5,142.5 1213.5,142.5 1221.5,142.5 1229.5,142.5 1237.5,142.5 1245.5,142.5 1253.5,141.5 1261.5,132.5 1269.5,132.5 1277.5,132.5 1285.5,132.5 1293.5,134.5 1301.5,136.5 1309.5,132.5 1317.5,132.5" fill="none" stroke="#dccad8" stroke-width="1" stroke-dasharray="3 3" stroke-linejoin="round" />
<polyline points="5.5,332.5 13.5,332.5 21.5,311.5 29.5,325.5 37.5,284.5 45.5,273.5 53.5,258.5 61.5,242.5 69.5,230.5 77.5,244.5 85.5,245.5 93.5,253.5 101.5,260.5 109.5,279.5 117.5,289.5 125.5,299.5 133.5,289.5 141.5,323.5 149.5,303.5 157.5,293.5 165.5,307.5 173.5,296.5 181.5,325.5 189.5,349.5 197.5,348.5 205.5,380.5 213.5,370.5 221.5,352.5 229.5,382.5 237.5,370.5 245.5,368.5 253.5,358.5 261.5,327.5 269.5,314.5 277.5,310.5 285.5,318.5 293.5,292.5 301.5,280.5 309.5,303.5 317.5,307.5 325.5,283.5 333.5,286.5 341.5,265.5 349.5,236.5 357.5,219.5 365.5,167.5 373.5,182.5 381.5,186.5 389.5,183.5 397.5,182.5 405.5,198.5 413.5,190.5 421.5,194.5 429.5,178.5 437.5,170.5 445.5,163.5 453.5,166.5 461.5,162.5 469.5,125.5 477.5,123.5 485.5,129.5 493.5,127.5 501.5,125.5 509.5,123.5 517.5,121.5 525.5,92.5 533.5,122.5 541.5,128.5 549.5,125.5 557.5,133.5 565.5,132.5 573.5,129.5 581.5,116.5 589.5,118.5 597.5,128.5 605.5,131.5 613.5,128.5 621.5,138.5 629.5,139.5 637.5,161.5 645.5,155.5 653.5,157.5 661.5,146.5 669.5,145.5 677.5,150.5 685.5,147.5 693.5,142.5 701.5,142.5 709.5,150.5 717.5,146.5 725.5,145.5 733.5,140.5 741.5,144.5 749.5,143.5 757.5,146.5 765.5,146.5 773.5,153.5 781.5,145.5 789.5,152.5 797.5,144.5 805.5,154.5 813.5,148.5 821.5,142.5 829.5,132.5 837.5,138.5 845.5,145.5 853.5,179.5 861.5,176.5 869.5,184.5 877.5,144.5 885.5,108.5 893.5,93.5 901.5,111.5 909.5,123.5 917.5,155.5 925.5,207.5 933.5,197.5 941.5,182.5 949.5,188.5 957.5,200.5 965.5,213.5 973.5,213.5 981.5,207.5 989.5,221.5 997.5,249.5 1005.5,245.5 1013.5,230.5 1021.5,223.5 1029.5,228.5 1037.5,278.5 1045.5,265.5 1053.5,270.5 1061.5,270.5 1069.5,301.5 1077.5,343.5 1085.5,340.5 1093.5,320.5 1101.5,293.5 1109.5,333.5 1117.5,355.5 1125.5,386.5 1133.5,401.5 1141.5,396.5 1149.5,386.5 1157.5,380.5 1165.5,375.5 1173.5,372.5 1181.5,357.5 1189.5,365.5 1197.5,353.5 1205.5,340.5 1213.5,335.5 1221.5,360.5 1229.5,333.5 1237.5,320.5 1245.5,301.5 1253.5,322.5 1261.5,297.5 1269.5,351.5 1277.5,367.5 1285.5,434.5 1293.5,416.5 1301.5,434.5 1309.5,482.5" fill="none" stroke="#22d43c" stroke-width="1" stroke-linejoin="round" shape-rendering="crispEdges" />
<polyline points="5.5,452.5 13.5,445.5 21.5,442.5 29.5,442.5 37.5,430.5 45.5,420.5 53.5,420.5 61.5,404.5 69.5,387.5 77.5,377.5 85.5,362.5 93.5,350.5 101.5,340.5 109.5,332.5 117.5,324.5 125.5,316.5 133.5,309.5 141.5,309.5 149.5,309.5 157.5,312.5 165.5,314.5 173.5,310.5 181.5,310.5 189.5,310.5 197.5,308.5 205.5,308.5 213.5,310.5 221.5,310.5 229.5,310.5 237.5,310.5 245.5,306.5 253.5,300.5 261.5,296.5 269.5,288.5 277.5,272.5 285.5,271.5 293.5,270.5 301.5,270.5 309.5,267.5 317.5,250.5 325.5,255.5 333.5,258.5 341.5,260.5 349.5,273.5 357.5,274.5 365.5,274.5 373.5,275.5 381.5,286.5 389.5,301.5 397.5,314.5 405.5,321.5 413.5,332.5 421.5,333.5 429.5,333.5 437.5,339.5 445.5,338.5 453.5,342.5 461.5,358.5 469.5,358.5 477.5,348.5 485.5,344.5 493.5,344.5 501.5,340.5 509.5,333.5 517.5,326.5 525.5,322.5 533.5,316.5 541.5,301.5 549.5,292.5 557.5,281.5 565.5,261.5 573.5,244.5 581.5,240.5 589.5,240.5 597.5,234.5 605.5,226.5 613.5,226.5 621.5,212.5 629.5,201.5 637.5,190.5 645.5,182.5 653.5,186.5 661.5,184.5 669.5,184.5 677.5,166.5 685.5,162.5 693.5,162.5 701.5,162.5 709.5,153.5 717.5,150.5 725.5,148.5 733.5,129.5 741.5,122.5 749.5,119.5 757.5,119.5 765.5,119.5 773.5,119.5 781.5,119.5 789.5,119.5 797.5,119.5 805.5,125.5 813.5,131.5 821.5,122.5 829.5,122.5 837.5,123.5 845.5,134.5 853.5,134.5 861.5,134.5 869.5,139.5 877.5,143.5 885.5,143.5 893.5,145.5 901.5,149.5 909.5,151.5 917.5,151.5 925.5,150.5 933.5,150.5 941.5,146.5 949.5,145.5 957.5,146.5 965.5,146.5 973.5,146.5 981.5,147.5 989.5,148.5 997.5,148.5 1005.5,148.5 1013.5,148.5 1021.5,148.5 1029.5,146.5 1037.5,145.5 1045.5,145.5 1053.5,145.5 1061.5,155.5 1069.5,157.5 1077.5,158.5 1085.5,161.5 1093.5,141.5 1101.5,134.5 1109.5,134.5 1117.5,134.5 1125.5,134.5 1133.5,141.5 1141.5,145.5 1149.5,145.5 1157.5,145.5 1165.5,145.5 1173.5,155.5 1181.5,158.5 1189.5,167.5 1197.5,192.5 1205.5,214.5 1213.5,214.5 1221.5,214.5 1229.5,216.5 1237.5,217.5 1245.5,251.5 1253.5,251.5 1261.5,256.5 1269.5,260.5 1277.5,261.5 1285.5,277.5 1293.5,277.5 1301.5,284.5 1309.5,291.5 1317.5,304.5" fill="none" stroke="#c01420" stroke-width="1" stroke-linejoin="round" shape-rendering="crispEdges" />
<polyline points="5.5,490.5 13.5,486.5 21.5,478.5 29.5,475.5 37.5,462.5 45.5,449.5 53.5,447.5 61.5,429.5 69.5,417.5 77.5,408.5 85.5,403.5 93.5,400.5 101.5,400.5 109.5,400.5 117.5,398.5 125.5,398.5 133.5,398.5 141.5,398.5 149.5,391.5 157.5,391.5 165.5,391.5 173.5,391.5 181.5,391.5 189.5,391.5 197.5,388.5 205.5,379.5 213.5,378.5 221.5,364.5 229.5,352.5 237.5,340.5 245.5,328.5 253.5,314.5 261.5,302.5 269.5,287.5 277.5,271.5 285.5,271.5 293.5,271.5 301.5,271.5 309.5,271.5 317.5,271.5 325.5,271.5 333.5,271.5 341.5,271.5 349.5,271.5 357.5,271.5 365.5,271.5 373.5,271.5 381.5,271.5 389.5,271.5 397.5,287.5 405.5,287.5 413.5,295.5 421.5,295.5 429.5,295.5 437.5,301.5 445.5,301.5 453.5,301.5 461.5,301.5 469.5,301.5 477.5,301.5 485.5,307.5 493.5,307.5 501.5,307.5 509.5,307.5 517.5,320.5 525.5,331.5 533.5,331.5 541.5,333.5 549.5,325.5 557.5,315.5 565.5,297.5 573.5,280.5 581.5,273.5 589.5,273.5 597.5,273.5 605.5,273.5 613.5,273.5 621.5,273.5 629.5,273.5 637.5,273.5 645.5,268.5 653.5,263.5 661.5,261.5 669.5,254.5 677.5,225.5 685.5,225.5 693.5,224.5 701.5,224.5 709.5,224.5 717.5,224.5 725.5,224.5 733.5,197.5 741.5,189.5 749.5,188.5 757.5,175.5 765.5,162.5 773.5,151.5 781.5,145.5 789.5,145.5 797.5,145.5 805.5,145.5 813.5,145.5 821.5,141.5 829.5,141.5 837.5,141.5 845.5,132.5 853.5,128.5 861.5,128.5 869.5,128.5 877.5,122.5 885.5,122.5 893.5,122.5 901.5,122.5 909.5,122.5 917.5,122.5 925.5,122.5 933.5,122.5 941.5,125.5 949.5,134.5 957.5,134.5 965.5,134.5 973.5,134.5 981.5,134.5 989.5,134.5 997.5,134.5 1005.5,138.5 1013.5,143.5 1021.5,143.5 1029.5,143.5 1037.5,146.5 1045.5,146.5 1053.5,145.5 1061.5,155.5 1069.5,157.5 1077.5,158.5 1085.5,161.5 1093.5,141.5 1101.5,134.5 1109.5,134.5 1117.5,134.5 1125.5,134.5 1133.5,141.5 1141.5,145.5 1149.5,145.5 1157.5,145.5 1165.5,145.5 1173.5,150.5 1181.5,150.5 1189.5,150.5 1197.5,158.5 1205.5,164.5 1213.5,164.5 1221.5,164.5 1229.5,164.5 1237.5,164.5 1245.5,193.5 1253.5,193.5 1261.5,193.5 1269.5,193.5 1277.5,193.5 1285.5,209.5 1293.5,209.5 1301.5,215.5 1309.5,223.5 1317.5,224.5" fill="none" stroke="#0c0c90" stroke-width="1.0" stroke-linejoin="round" shape-rendering="crispEdges" />
</g>
<g clip-path="url(#ci)">
<g shape-rendering="crispEdges" fill="#3a8fd8">
<rect x="5" y="537" width="1" height="48"/>
<rect x="13" y="538" width="1" height="47"/>
<rect x="21" y="534" width="1" height="51"/>
<rect x="29" y="531" width="1" height="54"/>
<rect x="37" y="526" width="1" height="59"/>
<rect x="45" y="520" width="1" height="65"/>
<rect x="53" y="516" width="1" height="69"/>
<rect x="61" y="510" width="1" height="75"/>
<rect x="69" y="504" width="1" height="81"/>
<rect x="77" y="498" width="1" height="87"/>
<rect x="85" y="496" width="1" height="89"/>
<rect x="93" y="495" width="1" height="90"/>
<rect x="101" y="496" width="1" height="89"/>
<rect x="109" y="498" width="1" height="87"/>
<rect x="117" y="501" width="1" height="84"/>
<rect x="125" y="505" width="1" height="80"/>
<rect x="133" y="509" width="1" height="76"/>
<rect x="141" y="514" width="1" height="71"/>
<rect x="149" y="519" width="1" height="66"/>
<rect x="157" y="523" width="1" height="62"/>
<rect x="165" y="526" width="1" height="59"/>
<rect x="173" y="527" width="1" height="58"/>
<rect x="181" y="531" width="1" height="54"/>
<rect x="189" y="534" width="1" height="51"/>
<rect x="197" y="535" width="1" height="50"/>
<rect x="205" y="538" width="1" height="47"/>
<rect x="213" y="544" width="1" height="41"/>
<rect x="221" y="549" width="1" height="36"/>
<rect x="229" y="551" width="1" height="34"/>
<rect x="237" y="554" width="1" height="31"/>
<rect x="245" y="551" width="1" height="34"/>
<rect x="253" y="548" width="1" height="37"/>
<rect x="261" y="545" width="1" height="40"/>
<rect x="269" y="540" width="1" height="45"/>
<rect x="277" y="535" width="1" height="50"/>
<rect x="285" y="534" width="1" height="51"/>
<rect x="293" y="533" width="1" height="52"/>
<rect x="301" y="535" width="1" height="50"/>
<rect x="309" y="537" width="1" height="48"/>
<rect x="317" y="542" width="1" height="43"/>
<rect x="325" y="548" width="1" height="37"/>
<rect x="333" y="555" width="1" height="30"/>
<rect x="341" y="559" width="1" height="26"/>
<rect x="349" y="567" width="1" height="18"/>
<rect x="357" y="570" width="1" height="15"/>
<rect x="365" y="572" width="1" height="13"/>
<rect x="373" y="576" width="1" height="9"/>
<rect x="381" y="577" width="1" height="8"/>
<rect x="389" y="582" width="1" height="3"/>
<rect x="397" y="585" width="1" height="2"/>
<rect x="405" y="585" width="1" height="9"/>
<rect x="413" y="585" width="1" height="17"/>
<rect x="421" y="585" width="1" height="21"/>
<rect x="429" y="585" width="1" height="23"/>
<rect x="437" y="585" width="1" height="27"/>
<rect x="445" y="585" width="1" height="29"/>
<rect x="453" y="585" width="1" height="31"/>
<rect x="461" y="585" width="1" height="29"/>
<rect x="469" y="585" width="1" height="23"/>
<rect x="477" y="585" width="1" height="17"/>
<rect x="485" y="585" width="1" height="12"/>
<rect x="493" y="585" width="1" height="9"/>
<rect x="501" y="585" width="1" height="3"/>
<rect x="509" y="582" width="1" height="3"/>
<rect x="517" y="580" width="1" height="5"/>
<rect x="525" y="579" width="1" height="6"/>
<rect x="533" y="575" width="1" height="10"/>
<rect x="541" y="573" width="1" height="12"/>
<rect x="549" y="568" width="1" height="17"/>
<rect x="557" y="561" width="1" height="24"/>
<rect x="565" y="553" width="1" height="32"/>
<rect x="573" y="540" width="1" height="45"/>
<rect x="581" y="533" width="1" height="52"/>
<rect x="589" y="528" width="1" height="57"/>
<rect x="597" y="525" width="1" height="60"/>
<rect x="605" y="523" width="1" height="62"/>
<rect x="613" y="524" width="1" height="61"/>
<rect x="621" y="525" width="1" height="60"/>
<rect x="629" y="527" width="1" height="58"/>
<rect x="637" y="527" width="1" height="58"/>
<rect x="645" y="525" width="1" height="60"/>
<rect x="653" y="524" width="1" height="61"/>
<rect x="661" y="525" width="1" height="60"/>
<rect x="669" y="526" width="1" height="59"/>
<rect x="677" y="522" width="1" height="63"/>
<rect x="685" y="519" width="1" height="66"/>
<rect x="693" y="519" width="1" height="66"/>
<rect x="701" y="519" width="1" height="66"/>
<rect x="709" y="520" width="1" height="65"/>
<rect x="717" y="521" width="1" height="64"/>
<rect x="725" y="522" width="1" height="63"/>
<rect x="733" y="520" width="1" height="65"/>
<rect x="741" y="523" width="1" height="62"/>
<rect x="749" y="527" width="1" height="58"/>
<rect x="757" y="530" width="1" height="55"/>
<rect x="765" y="534" width="1" height="51"/>
<rect x="773" y="538" width="1" height="47"/>
<rect x="781" y="541" width="1" height="44"/>
<rect x="789" y="542" width="1" height="43"/>
<rect x="797" y="544" width="1" height="41"/>
<rect x="805" y="547" width="1" height="38"/>
<rect x="813" y="550" width="1" height="35"/>
<rect x="821" y="553" width="1" height="32"/>
<rect x="829" y="557" width="1" height="28"/>
<rect x="837" y="560" width="1" height="25"/>
<rect x="845" y="566" width="1" height="19"/>
<rect x="853" y="570" width="1" height="15"/>
<rect x="861" y="574" width="1" height="11"/>
<rect x="869" y="575" width="1" height="10"/>
<rect x="877" y="576" width="1" height="9"/>
<rect x="885" y="578" width="1" height="7"/>
<rect x="893" y="579" width="1" height="6"/>
<rect x="901" y="579" width="1" height="6"/>
<rect x="909" y="580" width="1" height="5"/>
<rect x="917" y="580" width="1" height="5"/>
<rect x="925" y="580" width="1" height="5"/>
<rect x="933" y="582" width="1" height="3"/>
<rect x="941" y="581" width="1" height="4"/>
<rect x="949" y="582" width="1" height="3"/>
<rect x="957" y="582" width="1" height="3"/>
<rect x="965" y="582" width="1" height="3"/>
<rect x="973" y="583" width="1" height="2"/>
<rect x="981" y="584" width="1" height="1"/>
<rect x="989" y="584" width="1" height="1"/>
<rect x="997" y="584" width="1" height="1"/>
<rect x="1005" y="584" width="1" height="1"/>
<rect x="1013" y="584" width="1" height="1"/>
<rect x="1021" y="584" width="1" height="1"/>
<rect x="1029" y="584" width="1" height="1"/>
<rect x="1037" y="583" width="1" height="2"/>
<rect x="1045" y="583" width="1" height="2"/>
<rect x="1053" y="584" width="1" height="1"/>
<rect x="1061" y="585" width="1" height="1"/>
<rect x="1069" y="585" width="1" height="5"/>
<rect x="1077" y="585" width="1" height="9"/>
<rect x="1085" y="585" width="1" height="6"/>
<rect x="1101" y="578" width="1" height="7"/>
<rect x="1109" y="575" width="1" height="10"/>
<rect x="1117" y="574" width="1" height="11"/>
<rect x="1125" y="577" width="1" height="8"/>
<rect x="1133" y="585" width="1" height="1"/>
<rect x="1141" y="585" width="1" height="8"/>
<rect x="1149" y="585" width="1" height="11"/>
<rect x="1157" y="585" width="1" height="14"/>
<rect x="1165" y="585" width="1" height="17"/>
<rect x="1173" y="585" width="1" height="22"/>
<rect x="1181" y="585" width="1" height="25"/>
<rect x="1189" y="585" width="1" height="27"/>
<rect x="1197" y="585" width="1" height="30"/>
<rect x="1205" y="585" width="1" height="35"/>
<rect x="1213" y="585" width="1" height="38"/>
<rect x="1221" y="585" width="1" height="39"/>
<rect x="1229" y="585" width="1" height="37"/>
<rect x="1237" y="585" width="1" height="37"/>
<rect x="1245" y="585" width="1" height="42"/>
<rect x="1253" y="585" width="1" height="45"/>
<rect x="1261" y="585" width="1" height="47"/>
<rect x="1269" y="585" width="1" height="48"/>
<rect x="1277" y="585" width="1" height="52"/>
<rect x="1285" y="585" width="1" height="60"/>
<rect x="1293" y="585" width="1" height="66"/>
<rect x="1301" y="585" width="1" height="67"/>
<rect x="1309" y="585" width="1" height="63"/>
<rect x="1317" y="585" width="1" height="64"/>
</g>
<polyline points="5.5,529.5 13.5,530.5 21.5,530.5 29.5,530.5 37.5,530.5 45.5,530.5 53.5,527.5 61.5,525.5 69.5,522.5 77.5,519.5 85.5,514.5 93.5,510.5 101.5,506.5 109.5,502.5 117.5,500.5 125.5,500.5 133.5,500.5 141.5,500.5 149.5,503.5 157.5,506.5 165.5,508.5 173.5,512.5 181.5,515.5 189.5,520.5 197.5,522.5 205.5,525.5 213.5,529.5 221.5,532.5 229.5,535.5 237.5,539.5 245.5,541.5 253.5,544.5 261.5,545.5 269.5,546.5 277.5,545.5 285.5,544.5 293.5,542.5 301.5,541.5 309.5,538.5 317.5,538.5 325.5,538.5 333.5,539.5 341.5,541.5 349.5,544.5 357.5,548.5 365.5,552.5 373.5,557.5 381.5,561.5 389.5,565.5 397.5,570.5 405.5,575.5 413.5,580.5 421.5,584.5 429.5,589.5 437.5,594.5 445.5,598.5 453.5,602.5 461.5,606.5 469.5,608.5 477.5,610.5 485.5,610.5 493.5,608.5 501.5,606.5 509.5,602.5 517.5,598.5 525.5,594.5 533.5,589.5 541.5,585.5 549.5,581.5 557.5,576.5 565.5,572.5 573.5,566.5 581.5,560.5 589.5,555.5 597.5,549.5 605.5,543.5 613.5,537.5 621.5,533.5 629.5,530.5 637.5,527.5 645.5,525.5 653.5,524.5 661.5,524.5 669.5,524.5 677.5,524.5 685.5,523.5 693.5,523.5 701.5,522.5 709.5,521.5 717.5,521.5 725.5,520.5 733.5,520.5 741.5,520.5 749.5,520.5 757.5,521.5 765.5,522.5 773.5,525.5 781.5,527.5 789.5,530.5 797.5,532.5 805.5,535.5 813.5,538.5 821.5,541.5 829.5,544.5 837.5,547.5 845.5,549.5 853.5,553.5 861.5,557.5 869.5,559.5 877.5,563.5 885.5,567.5 893.5,570.5 901.5,572.5 909.5,574.5 917.5,576.5 925.5,577.5 933.5,578.5 941.5,579.5 949.5,579.5 957.5,580.5 965.5,580.5 973.5,581.5 981.5,581.5 989.5,581.5 997.5,582.5 1005.5,582.5 1013.5,582.5 1021.5,583.5 1029.5,583.5 1037.5,583.5 1045.5,583.5 1053.5,583.5 1061.5,584.5 1069.5,584.5 1077.5,585.5 1085.5,586.5 1093.5,586.5 1101.5,585.5 1109.5,584.5 1117.5,583.5 1125.5,583.5 1133.5,583.5 1141.5,583.5 1149.5,583.5 1157.5,584.5 1165.5,585.5 1173.5,588.5 1181.5,593.5 1189.5,598.5 1197.5,601.5 1205.5,605.5 1213.5,609.5 1221.5,612.5 1229.5,614.5 1237.5,617.5 1245.5,619.5 1253.5,621.5 1261.5,624.5 1269.5,625.5 1277.5,628.5 1285.5,630.5 1293.5,633.5 1301.5,635.5 1309.5,638.5 1317.5,641.5" fill="none" stroke="#b80c20" stroke-width="1.05" stroke-dasharray="3 3" stroke-linejoin="round" />
</g>
<text x="2" y="698.5" font-size="11.6" textLength="92" lengthAdjust="spacingAndGlyphs" fill="#000" >For Help, press F1</text>
<text x="678.5" y="698.5" font-size="11.6" textLength="37.5" lengthAdjust="spacingAndGlyphs" fill="#000" >Default</text>
<text x="1268.8" y="698.5" font-size="11.6" textLength="33" lengthAdjust="spacingAndGlyphs" fill="#000" >8/2 kb</text>
<rect x="672" y="685" width="1" height="19" fill="#a8a8a8" shape-rendering="crispEdges"/>
<rect x="788" y="685" width="1" height="19" fill="#a8a8a8" shape-rendering="crispEdges"/>
<rect x="890" y="685" width="1" height="19" fill="#a8a8a8" shape-rendering="crispEdges"/>
<rect x="961" y="685" width="1" height="19" fill="#a8a8a8" shape-rendering="crispEdges"/>
<rect x="1032" y="685" width="1" height="19" fill="#a8a8a8" shape-rendering="crispEdges"/>
<rect x="1100" y="685" width="1" height="19" fill="#a8a8a8" shape-rendering="crispEdges"/>
<rect x="1170" y="685" width="1" height="19" fill="#a8a8a8" shape-rendering="crispEdges"/>
<rect x="1236" y="685" width="1" height="19" fill="#a8a8a8" shape-rendering="crispEdges"/>
<rect x="1242" y="688" width="2" height="13" fill="#114a74"/>
<rect x="1242" y="688" width="2" height="9" fill="#6f8f14"/>
<rect x="1242" y="697.0" width="2" height="1" fill="#d8dcd0"/>
<rect x="1245" y="688" width="2" height="13" fill="#114a74"/>
<rect x="1245" y="688" width="2" height="8.4" fill="#6f8f14"/>
<rect x="1245" y="696.4" width="2" height="1" fill="#d8dcd0"/>
<rect x="1248" y="688" width="2" height="13" fill="#114a74"/>
<rect x="1248" y="688" width="2" height="7.4" fill="#6f8f14"/>
<rect x="1248" y="695.4" width="2" height="1" fill="#d8dcd0"/>
<rect x="1251" y="688" width="2" height="13" fill="#114a74"/>
<rect x="1251" y="688" width="2" height="6.4" fill="#6f8f14"/>
<rect x="1251" y="694.4" width="2" height="1" fill="#d8dcd0"/>
<rect x="1254" y="688" width="2" height="13" fill="#114a74"/>
<rect x="1254" y="688" width="2" height="4.3" fill="#6f8f14"/>
<rect x="1254" y="692.3" width="2" height="1" fill="#d8dcd0"/>
<rect x="1257" y="688" width="2" height="13" fill="#114a74"/>
<rect x="1257" y="688" width="2" height="2.8" fill="#6f8f14"/>
<rect x="1257" y="690.8" width="2" height="1" fill="#d8dcd0"/>
<rect x="1260" y="688" width="2" height="13" fill="#114a74"/>
<rect x="1260" y="688" width="2" height="1.7" fill="#6f8f14"/>
<rect x="1260" y="689.7" width="2" height="1" fill="#d8dcd0"/>
<rect x="1263" y="688" width="2" height="13" fill="#114a74"/>
<rect x="1263" y="688" width="2" height="0.7" fill="#6f8f14"/>
<rect x="1263" y="688.7" width="2" height="1" fill="#d8dcd0"/>
<line x1="1362.0" y1="704" x2="1365" y2="701" stroke="#8c8c8c" stroke-width="1.2"/>
<line x1="1358.0" y1="704" x2="1365" y2="697" stroke="#8c8c8c" stroke-width="1.2"/>
<line x1="1354.0" y1="704" x2="1365" y2="693" stroke="#8c8c8c" stroke-width="1.2"/>
</svg></body></html>
